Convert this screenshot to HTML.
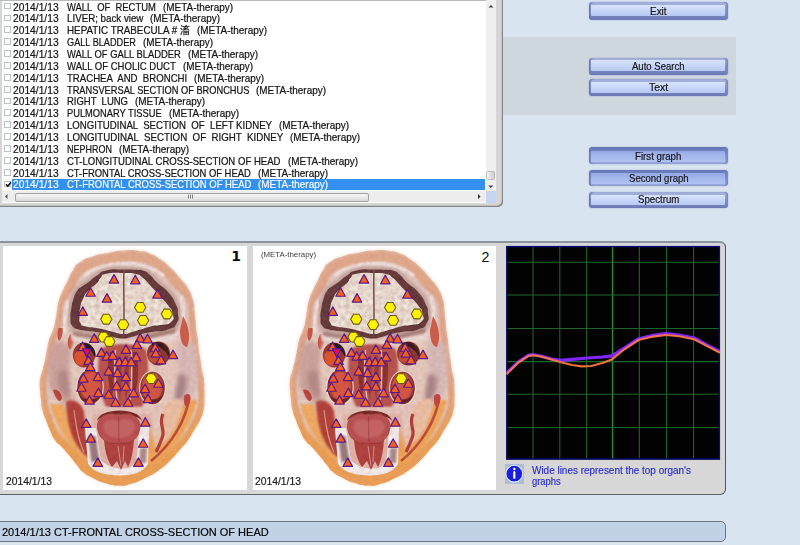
<!DOCTYPE html>
<html><head><meta charset="utf-8"><title>screen</title>
<style>
html,body{margin:0;padding:0;}
body{width:800px;height:545px;overflow:hidden;background:#d9e4f1;font-family:"Liberation Sans", "Noto Sans CJK SC", sans-serif;position:relative;}
.abs{position:absolute;}
.band{position:absolute;left:503px;top:37px;width:233px;height:78px;background:#ced6de;}
.listpanel{position:absolute;left:-4px;top:-6px;width:507.3px;height:213.3px;background:#d5d5d5;border-radius:0 0 5px 0;box-shadow:inset -1.2px -1.2px 0 #858585;}
.list{position:absolute;left:0;top:0;width:496px;height:203px;background:#fff;overflow:hidden;}
.list:before{content:"";position:absolute;left:0;top:0;width:2px;height:203px;background:#d6d6d6;}
.rt{position:absolute;transform-origin:0 0;-webkit-text-stroke:0.22px #1c1c1c;white-space:pre;font-size:10.2px;line-height:12px;color:#111;}
.rt.sel{color:#fff;-webkit-text-stroke:0.2px #eef4ff;}
.selrow{position:absolute;left:12.4px;width:473px;height:11.3px;background:#3390ee;}
.cb{position:absolute;left:4.4px;width:6.6px;height:6.8px;border:0.8px solid #bcc2c8;background:#fff;box-sizing:border-box;}
.cb svg{position:absolute;left:-0.8px;top:-0.6px;}
.vsb{position:absolute;left:485.5px;top:0;width:10.5px;height:190.5px;background:#efefef;}
.vthumb{position:absolute;left:486.3px;top:170.5px;width:9px;height:9.5px;background:linear-gradient(90deg,#f2f2f2,#cfcfcf);border:0.8px solid #bdbdbd;border-radius:1.5px;box-sizing:border-box;}
.hsb{position:absolute;left:2px;top:190.6px;width:483.5px;height:11.5px;background:#ededed;}
.hthumb{position:absolute;left:14.5px;top:193.2px;width:354px;height:9.3px;background:linear-gradient(#f8f8f8,#d9d9d9);border:1px solid #a0a0a0;border-radius:2px;box-sizing:border-box;}
.corner{position:absolute;left:485.5px;top:190.5px;width:10.5px;height:12.5px;background:#c6d6f2;}
.btn{position:absolute;border-radius:3.5px;background:linear-gradient(#a9b4dd 0%,#9aa7d6 25%,#7a89c0 70%,#6978b4 100%);box-shadow:0 0 1.2px rgba(110,125,185,.9), inset 1.5px 0 1px #6b7ab6, inset -1.5px 0 1px #7886be;}
.bi{position:absolute;border-radius:1px;background:linear-gradient(#d9e3fb 0%,#c8d6f8 50%,#b7c8f4 100%);}
.btn.pressed{background:linear-gradient(#6575b5 0%,#7585c2 30%,#8fa1d8 75%,#9aaade 100%);}
.btn.pressed .bi{background:linear-gradient(#94a8e4 0%,#a3b6ec 40%,#b0c2f2 100%);}
.bt{position:absolute;transform-origin:0 0;-webkit-text-stroke:0.2px #1c1c20;white-space:pre;font-size:10.3px;line-height:12px;color:#16161a;}
.lower{position:absolute;left:-5px;top:241px;width:731px;height:253.5px;background:#d7d7d8;border-radius:0 6px 6px 0;box-sizing:border-box;border-top:2.2px solid #8c939c;border-right:1.2px solid #4e5658;border-bottom:1.6px solid #5e6264;}
.img{position:absolute;top:246px;width:244px;height:244px;background:#fff;overflow:hidden;}
.head{position:absolute;left:0;top:0;}
.num{position:absolute;font-size:14.2px;line-height:16px;color:#0a0a0a;}
.date{position:absolute;-webkit-text-stroke:0.2px #222;transform-origin:0 0;font-size:10.2px;line-height:12px;color:#1a1a1a;white-space:pre;}
.meta{position:absolute;transform-origin:0 0;font-size:7.6px;line-height:10px;color:#3c3c3c;white-space:pre;}
.info{position:absolute;left:531.9px;-webkit-text-stroke:0.15px #3c3ccc;transform-origin:0 0;font-size:10.3px;line-height:12px;color:#2626cc;white-space:pre;}
.ico{position:absolute;left:505px;top:464.4px;width:19px;height:19.5px;background:#aabfd6;}
.status{position:absolute;left:-5px;top:520.8px;width:731px;height:21px;box-sizing:border-box;background:#c1d2e6;border:1px solid #6f767e;border-radius:0 5px 5px 0;}
.stext{position:absolute;-webkit-text-stroke:0.2px #111;left:2px;top:525.5px;transform-origin:0 0;font-size:11.2px;line-height:13px;color:#000;white-space:pre;}
</style></head><body>
<div class="band"></div>
<div class="listpanel"></div>
<div class="list">
<div class="cb" style="top:2.70px"></div>
<span class="rt" id="d0" style="left:13.4px;top:2.00px;transform:scaleX(1.0060)">2014/1/13</span>
<span class="rt" id="n0" style="left:67px;top:2.00px;transform:scaleX(0.9247)">WALL  OF  RECTUM</span>
<span class="rt" id="m0" style="left:162.80px;top:2.00px;transform:scaleX(0.9762)">(META-therapy)</span>
<div class="cb" style="top:14.56px"></div>
<span class="rt" id="d1" style="left:13.4px;top:13.00px;transform:scaleX(1.0060)">2014/1/13</span>
<span class="rt" id="n1" style="left:67px;top:13.00px;transform:scaleX(0.9569)">LIVER; back view</span>
<span class="rt" id="m1" style="left:150.40px;top:13.00px;transform:scaleX(0.9762)">(META-therapy)</span>
<div class="cb" style="top:26.42px"></div>
<span class="rt" id="d2" style="left:13.4px;top:25.00px;transform:scaleX(1.0060)">2014/1/13</span>
<span class="rt" id="n2" style="left:67px;top:25.00px;transform:scaleX(0.9640)">HEPATIC TRABECULA # 滀</span>
<span class="rt" id="m2" style="left:196.80px;top:25.00px;transform:scaleX(0.9762)">(META-therapy)</span>
<div class="cb" style="top:38.28px"></div>
<span class="rt" id="d3" style="left:13.4px;top:37.00px;transform:scaleX(1.0060)">2014/1/13</span>
<span class="rt" id="n3" style="left:67px;top:37.00px;transform:scaleX(0.8992)">GALL BLADDER</span>
<span class="rt" id="m3" style="left:142.90px;top:37.00px;transform:scaleX(0.9762)">(META-therapy)</span>
<div class="cb" style="top:50.14px"></div>
<span class="rt" id="d4" style="left:13.4px;top:49.00px;transform:scaleX(1.0060)">2014/1/13</span>
<span class="rt" id="n4" style="left:67px;top:49.00px;transform:scaleX(0.9229)">WALL OF GALL BLADDER</span>
<span class="rt" id="m4" style="left:187.90px;top:49.00px;transform:scaleX(0.9762)">(META-therapy)</span>
<div class="cb" style="top:62.00px"></div>
<span class="rt" id="d5" style="left:13.4px;top:61.00px;transform:scaleX(1.0060)">2014/1/13</span>
<span class="rt" id="n5" style="left:67px;top:61.00px;transform:scaleX(0.9345)">WALL OF CHOLIC DUCT</span>
<span class="rt" id="m5" style="left:182.80px;top:61.00px;transform:scaleX(0.9762)">(META-therapy)</span>
<div class="cb" style="top:73.86px"></div>
<span class="rt" id="d6" style="left:13.4px;top:73.00px;transform:scaleX(1.0060)">2014/1/13</span>
<span class="rt" id="n6" style="left:67px;top:73.00px;transform:scaleX(0.9437)">TRACHEA  AND  BRONCHI</span>
<span class="rt" id="m6" style="left:194.20px;top:73.00px;transform:scaleX(0.9762)">(META-therapy)</span>
<div class="cb" style="top:85.72px"></div>
<span class="rt" id="d7" style="left:13.4px;top:85.00px;transform:scaleX(1.0060)">2014/1/13</span>
<span class="rt" id="n7" style="left:67px;top:85.00px;transform:scaleX(0.9094)">TRANSVERSAL SECTION OF BRONCHUS</span>
<span class="rt" id="m7" style="left:256.40px;top:85.00px;transform:scaleX(0.9762)">(META-therapy)</span>
<div class="cb" style="top:97.58px"></div>
<span class="rt" id="d8" style="left:13.4px;top:96.00px;transform:scaleX(1.0060)">2014/1/13</span>
<span class="rt" id="n8" style="left:67px;top:96.00px;transform:scaleX(0.9315)">RIGHT  LUNG</span>
<span class="rt" id="m8" style="left:135.00px;top:96.00px;transform:scaleX(0.9762)">(META-therapy)</span>
<div class="cb" style="top:109.44px"></div>
<span class="rt" id="d9" style="left:13.4px;top:108.00px;transform:scaleX(1.0060)">2014/1/13</span>
<span class="rt" id="n9" style="left:67px;top:108.00px;transform:scaleX(0.9140)">PULMONARY TISSUE</span>
<span class="rt" id="m9" style="left:168.70px;top:108.00px;transform:scaleX(0.9762)">(META-therapy)</span>
<div class="cb" style="top:121.30px"></div>
<span class="rt" id="d10" style="left:13.4px;top:120.00px;transform:scaleX(1.0060)">2014/1/13</span>
<span class="rt" id="n10" style="left:67px;top:120.00px;transform:scaleX(0.9455)">LONGITUDINAL  SECTION  OF  LEFT KIDNEY</span>
<span class="rt" id="m10" style="left:279.00px;top:120.00px;transform:scaleX(0.9762)">(META-therapy)</span>
<div class="cb" style="top:133.16px"></div>
<span class="rt" id="d11" style="left:13.4px;top:132.00px;transform:scaleX(1.0060)">2014/1/13</span>
<span class="rt" id="n11" style="left:67px;top:132.00px;transform:scaleX(0.9549)">LONGITUDINAL  SECTION  OF  RIGHT  KIDNEY</span>
<span class="rt" id="m11" style="left:290.20px;top:132.00px;transform:scaleX(0.9762)">(META-therapy)</span>
<div class="cb" style="top:145.02px"></div>
<span class="rt" id="d12" style="left:13.4px;top:144.00px;transform:scaleX(1.0060)">2014/1/13</span>
<span class="rt" id="n12" style="left:67px;top:144.00px;transform:scaleX(0.8812)">NEPHRON</span>
<span class="rt" id="m12" style="left:118.90px;top:144.00px;transform:scaleX(0.9762)">(META-therapy)</span>
<div class="cb" style="top:156.88px"></div>
<span class="rt" id="d13" style="left:13.4px;top:156.00px;transform:scaleX(1.0060)">2014/1/13</span>
<span class="rt" id="n13" style="left:67px;top:156.00px;transform:scaleX(0.9398)">CT-LONGITUDINAL CROSS-SECTION OF HEAD</span>
<span class="rt" id="m13" style="left:287.50px;top:156.00px;transform:scaleX(0.9762)">(META-therapy)</span>
<div class="cb" style="top:168.74px"></div>
<span class="rt" id="d14" style="left:13.4px;top:168.00px;transform:scaleX(1.0060)">2014/1/13</span>
<span class="rt" id="n14" style="left:67px;top:168.00px;transform:scaleX(0.9251)">CT-FRONTAL CROSS-SECTION OF HEAD</span>
<span class="rt" id="m14" style="left:257.80px;top:168.00px;transform:scaleX(0.9762)">(META-therapy)</span>
<div class="selrow" style="top:178.8px"></div>
<div class="cb" style="top:180.60px"><svg width="7" height="7" viewBox="0 0 7 7"><path d="M1 3.2 L2.8 5.2 L6 1.2" fill="none" stroke="#000" stroke-width="1.5"/></svg></div>
<span class="rt sel" id="d15" style="left:13.4px;top:179.00px;transform:scaleX(1.0060)">2014/1/13</span>
<span class="rt sel" id="n15" style="left:67px;top:179.00px;transform:scaleX(0.9277)">CT-FRONTAL CROSS-SECTION OF HEAD</span>
<span class="rt sel" id="m15" style="left:258.30px;top:179.00px;transform:scaleX(0.9762)">(META-therapy)</span>
<div class="abs" style="left:0;top:0;width:496px;height:1.3px;background:#b9b9b9"></div><div class="vsb"></div><div class="vthumb"></div>
<div class="hsb"></div><div class="hthumb"></div><div class="corner"></div>
<svg class="abs" style="left:0;top:0" width="496" height="203" viewBox="0 0 496 203">
<path d="M488.5 7.5 L491 5 L493.5 7.5Z" fill="#444"/>
<path d="M488.3 185.6 L490.8 188.1 L493.3 185.6Z" fill="#444"/>
<path d="M7.5 194 L5 196.5 L7.5 199Z" fill="#555"/>
<path d="M478 194 L480.5 196.5 L478 199Z" fill="#333"/>
<path d="M188.5 194.5 V198.5 M190.5 194.5 V198.5 M192.5 194.5 V198.5" stroke="#666" stroke-width="0.8"/>
</svg>
</div>
<div class="btn" style="left:588.8px;top:2px;width:139.0px;height:18.0px"><div class="bi" style="left:2.5px;top:3.4px;width:133.3px;height:11.0px"></div></div><span class="bt" id="b0" style="left:650.00px;top:6px;transform:scaleX(0.9667)">Exit</span>
<div class="btn" style="left:588.8px;top:57.8px;width:139.0px;height:16.8px"><div class="bi" style="left:2.5px;top:2.7px;width:133.3px;height:11.0px"></div></div><span class="bt" id="b1" style="left:632.05px;top:61px;transform:scaleX(0.9264)">Auto Search</span>
<div class="btn" style="left:588.8px;top:79.2px;width:139.0px;height:17.0px"><div class="bi" style="left:2.5px;top:2.5px;width:133.3px;height:11.3px"></div></div><span class="bt" id="b2" style="left:648.70px;top:82px;transform:scaleX(1.0164)">Text</span>
<div class="btn pressed" style="left:588.8px;top:147.3px;width:139.0px;height:17.1px"><div class="bi" style="left:2.5px;top:3.7px;width:133.3px;height:10.8px"></div></div><span class="bt" id="b3" style="left:635.10px;top:151px;transform:scaleX(0.9427)">First graph</span>
<div class="btn pressed" style="left:588.8px;top:169.7px;width:139.0px;height:16.5px"><div class="bi" style="left:2.5px;top:3.3px;width:133.3px;height:10.6px"></div></div><span class="bt" id="b4" style="left:628.50px;top:173px;transform:scaleX(0.9294)">Second graph</span>
<div class="btn" style="left:588.8px;top:192.1px;width:139.0px;height:16.1px"><div class="bi" style="left:2.5px;top:2.7px;width:133.3px;height:10.0px"></div></div><span class="bt" id="b5" style="left:637.60px;top:194px;transform:scaleX(0.9392)">Spectrum</span>
<div class="lower"></div>
<div class="img" style="left:3px"><svg class="head" width="244" height="244" viewBox="3 246 244 244">
<defs>
<filter id="b05a" x="-20%" y="-20%" width="140%" height="140%"><feGaussianBlur stdDeviation="0.6"/></filter>
<filter id="b1a" x="-20%" y="-20%" width="140%" height="140%"><feGaussianBlur stdDeviation="1.1"/></filter>
<filter id="b2a" x="-30%" y="-30%" width="160%" height="160%"><feGaussianBlur stdDeviation="2"/></filter>
<filter id="b3a" x="-30%" y="-30%" width="160%" height="160%"><feGaussianBlur stdDeviation="3.2"/></filter>
<filter id="nza" x="0" y="0" width="100%" height="100%">
 <feTurbulence type="fractalNoise" baseFrequency="0.22" numOctaves="2" seed="7" result="n"/>
 <feColorMatrix in="n" type="matrix" values="0 0 0 0 0.45  0 0 0 0 0.2  0 0 0 0 0.18  0.9 0.9 0 0 -0.62"/>
 <feGaussianBlur stdDeviation="0.5"/>
</filter>
<linearGradient id="skina" x1="0" y1="0" x2="0" y2="1">
<stop offset="0" stop-color="#e2aa8c"/><stop offset="0.45" stop-color="#e0a488"/><stop offset="0.7" stop-color="#e6a572"/><stop offset="1" stop-color="#e8a267"/>
</linearGradient>
<clipPath id="hca"><path d="M124.0 250.5 C135.0 249.8 131.3 250.0 140.0 251.0 C148.7 252.0 143.3 250.8 150.0 253.5 C156.7 256.2 153.3 254.5 160.0 259.0 C166.7 263.5 163.3 260.7 170.0 267.0 C176.7 273.3 174.0 271.0 180.0 278.0 C186.0 285.0 183.7 280.7 188.0 288.0 C192.3 295.3 190.8 292.7 193.0 300.0 C195.2 307.3 193.7 303.3 194.5 310.0 C195.3 316.7 194.8 313.3 195.5 320.0 C196.2 326.7 195.7 323.3 196.5 330.0 C197.3 336.7 197.2 333.3 198.0 340.0 C198.8 346.7 198.2 343.3 199.0 350.0 C199.8 356.7 199.5 353.3 200.5 360.0 C201.5 366.7 200.8 363.3 202.0 370.0 C203.2 376.7 203.2 373.3 204.0 380.0 C204.8 386.7 204.3 383.3 204.5 390.0 C204.7 396.7 204.8 393.3 204.5 400.0 C204.2 406.7 205.0 403.3 203.5 410.0 C202.0 416.7 203.2 413.3 200.0 420.0 C196.8 426.7 198.0 423.3 194.0 430.0 C190.0 436.7 192.8 433.3 188.0 440.0 C183.2 446.7 185.3 443.3 179.5 450.0 C173.7 456.7 177.3 453.3 170.5 460.0 C163.7 466.7 167.5 464.0 159.0 470.0 C150.5 476.0 154.7 473.3 145.0 478.0 C135.3 482.7 139.0 481.5 130.0 484.0 C121.0 486.5 126.3 485.8 118.0 485.5 C109.7 485.2 113.3 485.5 105.0 483.0 C96.7 480.5 100.3 481.7 93.0 478.0 C85.7 474.3 88.3 476.3 83.0 472.0 C77.7 467.7 81.7 470.7 77.0 465.0 C72.3 459.3 74.0 461.0 69.0 455.0 C64.0 449.0 66.7 452.0 62.0 447.0 C57.3 442.0 59.0 445.7 55.0 440.0 C51.0 434.3 53.0 436.7 50.0 430.0 C47.0 423.3 48.5 426.7 46.0 420.0 C43.5 413.3 44.2 416.7 42.5 410.0 C40.8 403.3 41.8 406.7 41.0 400.0 C40.2 393.3 40.3 396.7 40.0 390.0 C39.7 383.3 39.2 386.7 40.0 380.0 C40.8 373.3 40.8 376.7 42.5 370.0 C44.2 363.3 43.5 366.7 45.0 360.0 C46.5 353.3 45.7 356.7 47.0 350.0 C48.3 343.3 47.0 346.7 49.0 340.0 C51.0 333.3 50.8 336.7 53.0 330.0 C55.2 323.3 54.2 326.7 55.5 320.0 C56.8 313.3 55.8 316.7 57.0 310.0 C58.2 303.3 57.0 306.7 59.0 300.0 C61.0 293.3 60.0 296.7 63.0 290.0 C66.0 283.3 64.7 286.7 68.0 280.0 C71.3 273.3 69.0 276.0 73.0 270.0 C77.0 264.0 73.0 266.7 80.0 262.0 C87.0 257.3 85.0 259.0 94.0 256.0 C103.0 253.0 97.0 254.8 107.0 253.0 C117.0 251.2 113.0 251.2 124.0 250.5Z"/></clipPath>
<clipPath id="bca"><path d="M124.0 273.0 C133.8 273.1 129.7 272.3 136.0 274.0 C142.3 275.7 138.6 274.5 143.0 278.0 C147.4 281.5 145.3 280.2 149.3 284.4 C153.3 288.6 151.3 286.5 155.0 290.5 C158.7 294.5 156.0 291.6 160.3 296.5 C164.6 301.4 164.0 299.8 168.0 305.3 C172.0 310.8 171.3 307.5 172.4 313.0 C173.5 318.5 175.3 317.8 171.3 321.8 C167.3 325.8 166.9 323.6 160.3 325.1 C153.7 326.6 158.1 324.7 151.5 326.2 C144.9 327.7 147.0 327.6 140.5 329.5 C134.0 331.4 137.8 330.5 132.0 332.0 C126.2 333.5 129.7 334.2 123.0 334.0 C116.3 333.8 119.9 333.4 112.0 331.5 C104.1 329.6 108.1 330.1 99.4 328.4 C90.7 326.7 92.3 328.3 86.0 326.5 C79.7 324.7 82.7 326.5 80.5 323.0 C78.3 319.5 79.6 321.2 79.5 316.0 C79.4 310.8 79.1 313.2 80.3 307.5 C81.5 301.8 80.4 304.5 83.0 299.0 C85.6 293.5 83.4 296.2 88.0 291.0 C92.6 285.8 92.6 287.6 96.8 283.3 C101.0 279.0 97.2 281.2 100.5 278.0 C103.8 274.8 98.9 275.5 106.7 273.8 C114.5 272.1 114.2 272.9 124.0 273.0Z"/></clipPath>
</defs>
<path d="M124.0 250.5 C135.0 249.8 131.3 250.0 140.0 251.0 C148.7 252.0 143.3 250.8 150.0 253.5 C156.7 256.2 153.3 254.5 160.0 259.0 C166.7 263.5 163.3 260.7 170.0 267.0 C176.7 273.3 174.0 271.0 180.0 278.0 C186.0 285.0 183.7 280.7 188.0 288.0 C192.3 295.3 190.8 292.7 193.0 300.0 C195.2 307.3 193.7 303.3 194.5 310.0 C195.3 316.7 194.8 313.3 195.5 320.0 C196.2 326.7 195.7 323.3 196.5 330.0 C197.3 336.7 197.2 333.3 198.0 340.0 C198.8 346.7 198.2 343.3 199.0 350.0 C199.8 356.7 199.5 353.3 200.5 360.0 C201.5 366.7 200.8 363.3 202.0 370.0 C203.2 376.7 203.2 373.3 204.0 380.0 C204.8 386.7 204.3 383.3 204.5 390.0 C204.7 396.7 204.8 393.3 204.5 400.0 C204.2 406.7 205.0 403.3 203.5 410.0 C202.0 416.7 203.2 413.3 200.0 420.0 C196.8 426.7 198.0 423.3 194.0 430.0 C190.0 436.7 192.8 433.3 188.0 440.0 C183.2 446.7 185.3 443.3 179.5 450.0 C173.7 456.7 177.3 453.3 170.5 460.0 C163.7 466.7 167.5 464.0 159.0 470.0 C150.5 476.0 154.7 473.3 145.0 478.0 C135.3 482.7 139.0 481.5 130.0 484.0 C121.0 486.5 126.3 485.8 118.0 485.5 C109.7 485.2 113.3 485.5 105.0 483.0 C96.7 480.5 100.3 481.7 93.0 478.0 C85.7 474.3 88.3 476.3 83.0 472.0 C77.7 467.7 81.7 470.7 77.0 465.0 C72.3 459.3 74.0 461.0 69.0 455.0 C64.0 449.0 66.7 452.0 62.0 447.0 C57.3 442.0 59.0 445.7 55.0 440.0 C51.0 434.3 53.0 436.7 50.0 430.0 C47.0 423.3 48.5 426.7 46.0 420.0 C43.5 413.3 44.2 416.7 42.5 410.0 C40.8 403.3 41.8 406.7 41.0 400.0 C40.2 393.3 40.3 396.7 40.0 390.0 C39.7 383.3 39.2 386.7 40.0 380.0 C40.8 373.3 40.8 376.7 42.5 370.0 C44.2 363.3 43.5 366.7 45.0 360.0 C46.5 353.3 45.7 356.7 47.0 350.0 C48.3 343.3 47.0 346.7 49.0 340.0 C51.0 333.3 50.8 336.7 53.0 330.0 C55.2 323.3 54.2 326.7 55.5 320.0 C56.8 313.3 55.8 316.7 57.0 310.0 C58.2 303.3 57.0 306.7 59.0 300.0 C61.0 293.3 60.0 296.7 63.0 290.0 C66.0 283.3 64.7 286.7 68.0 280.0 C71.3 273.3 69.0 276.0 73.0 270.0 C77.0 264.0 73.0 266.7 80.0 262.0 C87.0 257.3 85.0 259.0 94.0 256.0 C103.0 253.0 97.0 254.8 107.0 253.0 C117.0 251.2 113.0 251.2 124.0 250.5Z" fill="url(#skina)" filter="url(#b05a)"/>
<path d="M124.0 250.5 C135.0 249.8 131.3 250.0 140.0 251.0 C148.7 252.0 143.3 250.8 150.0 253.5 C156.7 256.2 153.3 254.5 160.0 259.0 C166.7 263.5 163.3 260.7 170.0 267.0 C176.7 273.3 174.0 271.0 180.0 278.0 C186.0 285.0 183.7 280.7 188.0 288.0 C192.3 295.3 190.8 292.7 193.0 300.0 C195.2 307.3 193.7 303.3 194.5 310.0 C195.3 316.7 194.8 313.3 195.5 320.0 C196.2 326.7 195.7 323.3 196.5 330.0 C197.3 336.7 197.2 333.3 198.0 340.0 C198.8 346.7 198.2 343.3 199.0 350.0 C199.8 356.7 199.5 353.3 200.5 360.0 C201.5 366.7 200.8 363.3 202.0 370.0 C203.2 376.7 203.2 373.3 204.0 380.0 C204.8 386.7 204.3 383.3 204.5 390.0 C204.7 396.7 204.8 393.3 204.5 400.0 C204.2 406.7 205.0 403.3 203.5 410.0 C202.0 416.7 203.2 413.3 200.0 420.0 C196.8 426.7 198.0 423.3 194.0 430.0 C190.0 436.7 192.8 433.3 188.0 440.0 C183.2 446.7 185.3 443.3 179.5 450.0 C173.7 456.7 177.3 453.3 170.5 460.0 C163.7 466.7 167.5 464.0 159.0 470.0 C150.5 476.0 154.7 473.3 145.0 478.0 C135.3 482.7 139.0 481.5 130.0 484.0 C121.0 486.5 126.3 485.8 118.0 485.5 C109.7 485.2 113.3 485.5 105.0 483.0 C96.7 480.5 100.3 481.7 93.0 478.0 C85.7 474.3 88.3 476.3 83.0 472.0 C77.7 467.7 81.7 470.7 77.0 465.0 C72.3 459.3 74.0 461.0 69.0 455.0 C64.0 449.0 66.7 452.0 62.0 447.0 C57.3 442.0 59.0 445.7 55.0 440.0 C51.0 434.3 53.0 436.7 50.0 430.0 C47.0 423.3 48.5 426.7 46.0 420.0 C43.5 413.3 44.2 416.7 42.5 410.0 C40.8 403.3 41.8 406.7 41.0 400.0 C40.2 393.3 40.3 396.7 40.0 390.0 C39.7 383.3 39.2 386.7 40.0 380.0 C40.8 373.3 40.8 376.7 42.5 370.0 C44.2 363.3 43.5 366.7 45.0 360.0 C46.5 353.3 45.7 356.7 47.0 350.0 C48.3 343.3 47.0 346.7 49.0 340.0 C51.0 333.3 50.8 336.7 53.0 330.0 C55.2 323.3 54.2 326.7 55.5 320.0 C56.8 313.3 55.8 316.7 57.0 310.0 C58.2 303.3 57.0 306.7 59.0 300.0 C61.0 293.3 60.0 296.7 63.0 290.0 C66.0 283.3 64.7 286.7 68.0 280.0 C71.3 273.3 69.0 276.0 73.0 270.0 C77.0 264.0 73.0 266.7 80.0 262.0 C87.0 257.3 85.0 259.0 94.0 256.0 C103.0 253.0 97.0 254.8 107.0 253.0 C117.0 251.2 113.0 251.2 124.0 250.5Z" fill="none" stroke="#f4d6c4" stroke-width="1.8" filter="url(#b1a)" opacity=".7"/>
<g clip-path="url(#hca)">
 <!-- inner pale (skull + soft tissue) -->
 <path d="M123.8 262.0 C133.7 261.3 130.4 261.5 138.2 262.4 C145.9 263.2 141.2 262.2 147.1 264.6 C153.1 267.1 150.1 265.6 156.0 269.8 C161.9 274.0 158.9 271.5 164.8 277.2 C170.7 283.0 168.0 281.1 173.7 287.0 C179.4 292.8 177.2 288.9 181.8 294.8 C186.5 300.6 185.4 298.1 187.7 304.5 C190.0 310.9 188.2 307.7 188.8 314.0 C189.3 320.3 188.9 317.2 189.4 323.4 C189.8 329.6 189.4 326.5 190.0 332.6 C190.6 338.8 190.6 335.7 191.2 341.8 C191.9 347.9 191.3 344.8 192.1 350.9 C192.8 357.0 192.5 353.9 193.5 360.0 C194.5 366.1 193.8 363.0 195.1 369.1 C196.3 375.2 196.2 372.2 197.2 378.3 C198.2 384.5 197.6 381.4 197.9 387.6 C198.3 393.8 198.3 390.7 198.2 396.9 C198.1 403.2 198.8 400.1 197.5 406.3 C196.3 412.6 197.1 409.3 194.5 415.7 C191.8 422.1 192.8 418.9 189.5 425.6 C186.2 432.2 188.7 428.9 184.5 435.7 C180.2 442.4 182.1 439.0 176.9 445.9 C171.6 452.7 175.0 449.3 168.7 456.2 C162.4 463.2 166.0 460.6 157.9 466.7 C149.8 472.8 153.7 470.0 144.3 474.6 C135.0 479.2 138.5 478.0 129.8 480.5 C121.0 483.0 126.2 482.3 118.1 482.0 C110.0 481.7 113.6 482.0 105.5 479.5 C97.4 477.1 101.0 478.2 93.8 474.6 C86.7 471.0 89.3 473.1 84.2 468.7 C79.1 464.3 82.8 467.4 78.5 461.5 C74.2 455.6 75.8 457.3 71.2 451.0 C66.7 444.8 69.1 447.9 64.9 442.8 C60.7 437.7 62.1 441.4 58.6 435.7 C55.1 430.0 56.9 432.3 54.5 425.6 C52.2 418.9 53.5 422.1 51.5 415.7 C49.5 409.2 49.8 412.5 48.4 406.3 C47.0 400.0 47.9 403.1 47.3 396.9 C46.7 390.7 46.7 393.8 46.6 387.6 C46.4 381.4 45.8 384.5 46.8 378.4 C47.8 372.2 47.7 375.2 49.4 369.1 C51.2 363.0 50.5 366.1 52.0 360.0 C53.5 353.9 52.7 357.0 53.9 350.9 C55.2 344.9 53.9 347.9 55.8 341.8 C57.6 335.8 57.5 338.9 59.4 332.8 C61.3 326.7 60.5 329.8 61.5 323.6 C62.6 317.4 61.7 320.5 62.6 314.2 C63.4 308.0 62.0 310.7 64.1 304.8 C66.1 299.0 65.4 302.1 68.7 296.7 C72.0 291.4 70.7 294.3 74.0 288.8 C77.2 283.2 75.0 285.5 78.5 280.1 C82.1 274.7 78.4 276.9 84.6 272.6 C90.7 268.2 89.0 269.8 97.0 267.1 C105.1 264.4 99.7 266.1 108.6 264.4 C117.6 262.7 114.0 262.7 123.8 262.0Z" fill="#e4ccc4" filter="url(#b1a)"/>
 <!-- mauve shadow around brain -->
 <path d="M124.0 269.5 C133.8 269.3 129.5 269.4 136.0 269.8 C142.5 270.2 138.7 269.1 143.4 270.8 C148.1 272.5 145.5 271.1 150.0 275.0 C154.5 278.9 151.0 276.8 157.0 282.5 C163.0 288.2 161.8 284.9 168.0 292.1 C174.2 299.3 172.4 297.2 175.7 304.2 C179.0 311.2 177.5 306.7 177.9 313.0 C178.3 319.3 180.1 317.5 176.8 323.0 C173.5 328.5 176.4 326.5 168.0 329.5 C159.6 332.5 160.7 330.4 151.5 332.0 C142.3 333.6 147.0 332.6 140.5 334.2 C134.0 335.8 137.8 335.4 132.0 336.8 C126.2 338.2 129.7 338.6 123.0 338.5 C116.3 338.4 120.0 338.5 112.0 336.5 C104.0 334.5 107.0 334.3 99.0 332.5 C91.0 330.7 94.7 332.0 88.0 331.0 C81.3 330.0 84.2 331.2 79.0 329.5 C73.8 327.8 75.3 329.8 72.5 326.0 C69.7 322.2 70.8 324.2 70.5 318.0 C70.2 311.8 70.5 313.8 71.5 307.5 C72.5 301.2 71.7 304.5 73.5 299.0 C75.3 293.5 74.2 295.2 77.0 291.0 C79.8 286.8 78.3 289.3 82.0 286.5 C85.7 283.7 83.0 286.2 88.0 282.5 C93.0 278.8 90.8 279.5 97.0 275.5 C103.2 271.5 97.7 272.4 106.7 270.4 C115.7 268.4 114.2 269.7 124.0 269.5Z" fill="none" stroke="#b08a86" stroke-width="5" filter="url(#b2a)" opacity=".8"/>
 <!-- white highlights on skull -->
 <path d="M84 276 C96 266 110 263.5 124 263.5 C138 263.5 152 266 164 276" fill="none" stroke="#f6ecea" stroke-width="2.5" filter="url(#b1a)"/>
 <path d="M68 300 C66 310 64 322 64 334" fill="none" stroke="#f3e6e2" stroke-width="3" filter="url(#b1a)"/>
 <path d="M181 296 C183 306 184 318 184 330" fill="none" stroke="#f3e6e2" stroke-width="3" filter="url(#b1a)"/>
 <!-- lower orange fat -->
 <path d="M38 398 C44 445 80 488 122 488 C165 488 202 445 207 398 C200 420 184 440 162 452 C152 444 150 425 150 415 L96 415 C96 425 94 444 84 452 C62 440 46 420 38 398Z" fill="#eda052" filter="url(#b2a)"/>
 <path d="M50 404 C56 430 74 452 94 466 L99 456 C84 444 70 428 64 404Z" fill="#f2ab60" filter="url(#b1a)"/>
 <path d="M197 400 C190 430 172 452 150 466 L146 456 C164 442 178 424 184 400Z" fill="#f2a654" filter="url(#b1a)"/>
 <!-- cheeks pale gray-pink -->
 <path d="M52 345 C58 338 70 342 74 350 C78 370 76 395 82 410 C70 410 54 400 49 385 C47 370 49 355 52 345Z" fill="#cda59e" filter="url(#b2a)"/>
 <path d="M58 372 C62 368 70 370 72 378 C73 388 72 394 68 398 C60 394 56 384 58 372Z" fill="#b48a88" filter="url(#b2a)"/>
 <path d="M195 345 C189 338 176 342 172 350 C168 370 170 395 164 410 C176 410 192 400 197 385 C199 370 197 355 195 345Z" fill="#d9bcba" filter="url(#b2a)"/>
 <path d="M186 376 C182 372 174 374 172 382 C171 392 173 398 178 402 C184 398 188 388 186 376Z" fill="#a88486" filter="url(#b2a)"/>
 <!-- temporal muscle crescents -->
 <path d="M58.5 328 C57 334 57 338 59 341 C62 338 63 333 62.5 328Z" fill="#c4523f" filter="url(#b05a)"/>
 <path d="M70 334 C67 340 67 346 70 350 C74 346 75 340 74 334Z" fill="#c8503e" filter="url(#b05a)"/>
 <path d="M183 316 C189 326 191 338 187 347 C182 346 180 340 180 330Z" fill="#cc5a46" filter="url(#b05a)"/>
 <!-- mid face base pale -->
 <path d="M74 340 C96 336 150 336 174 340 C180 356 180 392 168 408 C150 414 96 414 78 408 C66 392 68 356 74 340Z" fill="#e6cabf" filter="url(#b2a)"/>
 <!-- pale bone between orbits / under brain -->
 <path d="M70 333 C90 337 110 339 124 343 C138 339 158 337 178 332 L176 340 C160 344 140 344 124 348 C108 344 88 344 72 341Z" fill="#ecdcd6" filter="url(#b1a)"/>
 <!-- shadow under brain -->
 <path d="M72 331 C84 334 100 335 110 337 L108 341 C98 339 84 338 74 336Z" fill="#9a6e68" filter="url(#b1a)" opacity=".8"/>
 <path d="M176 328 C164 332 148 334 138 337 L140 341 C150 338 164 336 175 333Z" fill="#9a6e68" filter="url(#b1a)" opacity=".8"/>
 <!-- orbits -->
 <ellipse cx="84" cy="355" rx="11.2" ry="12.5" fill="#96342a" filter="url(#b05a)"/>
 <path d="M80 343.2 C90 341.5 96.5 348 95.5 358 C93 351 88 347 80 346.5Z" fill="#160a0a" filter="url(#b05a)"/>
 <ellipse cx="82" cy="357.5" rx="7.8" ry="8.3" fill="#de5028" filter="url(#b05a)"/>
 <ellipse cx="158.5" cy="353.5" rx="11.5" ry="12" fill="#86302a" filter="url(#b05a)"/>
 <path d="M152 342.5 C163 340 170.5 347 169.5 358 C166 351 161 346 152 345.5Z" fill="#341412" filter="url(#b05a)"/>
 <ellipse cx="155" cy="356.5" rx="6.5" ry="6.5" fill="#c4482e" filter="url(#b05a)"/>
 <!-- nasal cavity -->
 <path d="M100 350 C108 342 138 342 146 350 C150 365 148 392 142 407 L106 407 C99 392 96 365 100 350Z" fill="#b85048" filter="url(#b1a)"/>
 <path d="M110 352 C106 366 108 384 112 398 C114 384 114 366 113 352Z" fill="#8a2e2c" filter="url(#b05a)"/>
 <path d="M136 352 C140 366 138 384 134 398 C132 384 132 366 133 352Z" fill="#8a2e2c" filter="url(#b05a)"/>
 <path d="M118 356 C116 370 117 388 120 400 C122 388 122 370 121 356Z" fill="#9a3836" filter="url(#b05a)"/>
 <path d="M128 356 C130 370 129 388 126 400 C124 388 124 370 125 356Z" fill="#9a3836" filter="url(#b05a)"/>
 <path d="M123.5 346 L123.5 404" stroke="#eed2ca" stroke-width="1.8" fill="none" filter="url(#b05a)"/>
 <path d="M115.5 350 C114 364 115 384 117 400 M131 350 C132.5 364 131.5 384 130 400" stroke="#e6beb4" stroke-width="1.400" fill="none" filter="url(#b05a)"/>
 <!-- maxillary sinuses -->
 <ellipse cx="90" cy="387" rx="13.8" ry="18.3" fill="#f0ded8" filter="url(#b05a)"/>
 <ellipse cx="90" cy="387" rx="12.6" ry="17.2" fill="#7e2826" filter="url(#b05a)"/>
 <ellipse cx="90.5" cy="386" rx="10.8" ry="15" fill="#d8523e" filter="url(#b1a)"/>
 <path d="M80 396 C84 404 96 405 101 396 C96 400 86 401 80 396Z" fill="#5e1c1c" filter="url(#b05a)"/>
 <ellipse cx="152.5" cy="388" rx="13.5" ry="17.5" fill="#f0ded8" filter="url(#b05a)"/>
 <ellipse cx="152.5" cy="388" rx="12.3" ry="16.3" fill="#7e2826" filter="url(#b05a)"/>
 <ellipse cx="152" cy="387" rx="10.5" ry="14.3" fill="#d25240" filter="url(#b1a)"/>
 <path d="M143 397 C148 405 159 405 163 395 C158 400 149 401 143 397Z" fill="#5e1c1c" filter="url(#b05a)"/>
 <!-- palate pale band -->
 <path d="M82 404 C100 410 146 410 166 404 L164 414 C146 419 100 419 84 414Z" fill="#e6c8be" filter="url(#b1a)"/>
 <!-- masseter / pterygoid muscles -->
 <path d="M66 402 C72 398 82 402 84 412 C86 428 86 444 91 459 C78 452 67 434 66 402Z" fill="#b03e34" filter="url(#b1a)"/><path d="M74 410 C76 426 78 440 84 452" stroke="#e6b8a8" stroke-width="1.2" fill="none" filter="url(#b05a)" opacity=".7"/>
 <path d="M182 400 C174 396 164 402 162 412 C160 424 158 436 154 448 C166 444 180 430 182 400Z" fill="#ecc0a4" filter="url(#b1a)"/><path d="M189 398 C186 420 172 444 151 461" stroke="#b94a38" stroke-width="2.6" fill="none" filter="url(#b05a)"/><path d="M163 414 C158 424 166 430 162 438 C160 444 158 448 156 452" stroke="#b03a34" stroke-width="3.2" fill="none" filter="url(#b05a)"/>
 
 <path d="M53 390 C57 388 61 392 62 398 C60 404 56 400 53 390Z" fill="#b84038" filter="url(#b05a)"/>
 <path d="M184 396 C188 392 192 394 190 402 C188 410 183 408 184 396Z" fill="#c0443c" filter="url(#b05a)"/>
 <!-- mouth floor pinkish -->
 <path d="M94 414 L152 414 L150 440 L140 470 L98 470 L92 440Z" fill="#e2b4a8" filter="url(#b1a)"/>
 <!-- mandible white U -->
 <path d="M85 428 L96 428 L101 460 C106 466 114 468.5 122 468.5 C130 468.5 134 466 136.5 460 L139.5 427 L149 427 L148 464 C143 472 134 475.5 120 475.5 C104 475.5 94 472 88 464Z" fill="#f4efee" filter="url(#b05a)"/>
 <path d="M88 436 L95.5 436 L99.5 461 L91.5 462Z" fill="#8c6a6e" filter="url(#b1a)" opacity=".9"/>
 <path d="M147 448 L140.5 448 L139 463 L146 463Z" fill="#9a7876" filter="url(#b1a)" opacity=".85"/>
 <!-- oral cavity dark arc -->
 <path d="M97 421 C99 407 140 407 142 421 C138 412.5 101 412.5 97 421Z" fill="#742622" filter="url(#b05a)"/>
 <!-- genioglossus (lower tongue) -->
 <path d="M104 436 L134 436 C134 450 131 462 128 467 L125 461 L121 470 L117 461 L112 467 C108 462 104 450 104 436Z" fill="#ad3e3a" filter="url(#b05a)"/>
 <path d="M118 446 L121 466 M124 446 L123 462" stroke="#e8c8c0" stroke-width="0.9" fill="none" opacity=".7"/>
 <!-- tongue -->
 <path d="M97.5 427 C97 415.5 109 411 118.5 415.5 C128 411 140.5 415.5 140 427 C139.5 436 134 441 128 443 L110 443 C103 441 98 436 97.5 427Z" fill="#b94c4e" stroke="#8e3434" stroke-width="0.6" filter="url(#b05a)"/>
 <path d="M103 427 C103 420 111 417 118.5 421 C126 417 135 420 135 427 C134 434 128 438 119 438 C110 438 104 434 103 427Z" fill="#c96a6a" filter="url(#b1a)" opacity=".75"/>
 <path d="M118.5 416 L119 442" stroke="#8e3438" stroke-width="0.9" opacity=".7"/>
 <!-- brain -->
 <path d="M124.0 269.5 C133.8 269.3 129.5 269.4 136.0 269.8 C142.5 270.2 138.7 269.1 143.4 270.8 C148.1 272.5 145.5 271.1 150.0 275.0 C154.5 278.9 151.0 276.8 157.0 282.5 C163.0 288.2 161.8 284.9 168.0 292.1 C174.2 299.3 172.4 297.2 175.7 304.2 C179.0 311.2 177.5 306.7 177.9 313.0 C178.3 319.3 180.1 317.5 176.8 323.0 C173.5 328.5 176.4 326.5 168.0 329.5 C159.6 332.5 160.7 330.4 151.5 332.0 C142.3 333.6 147.0 332.6 140.5 334.2 C134.0 335.8 137.8 335.4 132.0 336.8 C126.2 338.2 129.7 338.6 123.0 338.5 C116.3 338.4 120.0 338.5 112.0 336.5 C104.0 334.5 107.0 334.3 99.0 332.5 C91.0 330.7 94.7 332.0 88.0 331.0 C81.3 330.0 84.2 331.2 79.0 329.5 C73.8 327.8 75.3 329.8 72.5 326.0 C69.7 322.2 70.8 324.2 70.5 318.0 C70.2 311.8 70.5 313.8 71.5 307.5 C72.5 301.2 71.7 304.5 73.5 299.0 C75.3 293.5 74.2 295.2 77.0 291.0 C79.8 286.8 78.3 289.3 82.0 286.5 C85.7 283.7 83.0 286.2 88.0 282.5 C93.0 278.8 90.8 279.5 97.0 275.5 C103.2 271.5 97.7 272.4 106.7 270.4 C115.7 268.4 114.2 269.7 124.0 269.5Z" fill="#5e3634" filter="url(#b05a)"/>
 <path d="M124.0 273.0 C133.8 273.1 129.7 272.3 136.0 274.0 C142.3 275.7 138.6 274.5 143.0 278.0 C147.4 281.5 145.3 280.2 149.3 284.4 C153.3 288.6 151.3 286.5 155.0 290.5 C158.7 294.5 156.0 291.6 160.3 296.5 C164.6 301.4 164.0 299.8 168.0 305.3 C172.0 310.8 171.3 307.5 172.4 313.0 C173.5 318.5 175.3 317.8 171.3 321.8 C167.3 325.8 166.9 323.6 160.3 325.1 C153.7 326.6 158.1 324.7 151.5 326.2 C144.9 327.7 147.0 327.6 140.5 329.5 C134.0 331.4 137.8 330.5 132.0 332.0 C126.2 333.5 129.7 334.2 123.0 334.0 C116.3 333.8 119.9 333.4 112.0 331.5 C104.1 329.6 108.1 330.1 99.4 328.4 C90.7 326.7 92.3 328.3 86.0 326.5 C79.7 324.7 82.7 326.5 80.5 323.0 C78.3 319.5 79.6 321.2 79.5 316.0 C79.4 310.8 79.1 313.2 80.3 307.5 C81.5 301.8 80.4 304.5 83.0 299.0 C85.6 293.5 83.4 296.2 88.0 291.0 C92.6 285.8 92.6 287.6 96.8 283.3 C101.0 279.0 97.2 281.2 100.5 278.0 C103.8 274.8 98.9 275.5 106.7 273.8 C114.5 272.1 114.2 272.9 124.0 273.0Z" fill="#f0e8dc" filter="url(#b05a)"/>
 <g clip-path="url(#bca)"><rect x="70" y="268" width="112" height="72" fill="#b89080" filter="url(#nza)" opacity=".32"/></g>
 <path d="M124 270 C123 290 125 310 123.5 337" stroke="#6e4a44" stroke-width="1.5" fill="none" filter="url(#b05a)"/>
 <!-- overall texture -->
 <rect x="36" y="248" width="172" height="240" fill="#000" filter="url(#nza)" opacity=".28"/>
</g>
<polygon points="145.8,307.4 143.0,312.3 137.4,312.3 134.6,307.4 137.4,302.5 143.0,302.5" fill="#fff200" stroke="#6e5e14" stroke-width="1.1"/><polygon points="172.5,314.0 169.7,318.9 164.1,318.9 161.3,314.0 164.1,309.1 169.7,309.1" fill="#fff200" stroke="#6e5e14" stroke-width="1.1"/><polygon points="111.9,319.2 109.1,324.1 103.5,324.1 100.7,319.2 103.5,314.3 109.1,314.3" fill="#fff200" stroke="#6e5e14" stroke-width="1.1"/><polygon points="148.7,320.4 145.9,325.3 140.3,325.3 137.5,320.4 140.3,315.5 145.9,315.5" fill="#fff200" stroke="#6e5e14" stroke-width="1.1"/><polygon points="128.8,324.6 126.0,329.5 120.4,329.5 117.6,324.6 120.4,319.7 126.0,319.7" fill="#fff200" stroke="#6e5e14" stroke-width="1.1"/><polygon points="114.0,274.6 118.8,283.1 109.2,283.1" fill="#f5601a" stroke="#5a1a8c" stroke-width="1.15" stroke-linejoin="round"/><polygon points="135.3,275.2 140.1,283.8 130.6,283.8" fill="#f5601a" stroke="#5a1a8c" stroke-width="1.15" stroke-linejoin="round"/><polygon points="90.6,287.8 95.3,296.2 85.8,296.2" fill="#f5601a" stroke="#5a1a8c" stroke-width="1.15" stroke-linejoin="round"/><polygon points="157.4,289.6 162.2,298.1 152.7,298.1" fill="#f5601a" stroke="#5a1a8c" stroke-width="1.15" stroke-linejoin="round"/><polygon points="107.0,293.6 111.8,302.1 102.2,302.1" fill="#f5601a" stroke="#5a1a8c" stroke-width="1.15" stroke-linejoin="round"/><polygon points="82.8,306.9 87.5,315.4 78.0,315.4" fill="#f5601a" stroke="#5a1a8c" stroke-width="1.15" stroke-linejoin="round"/><polygon points="94.3,333.9 99.0,342.4 89.5,342.4" fill="#f5601a" stroke="#5a1a8c" stroke-width="1.15" stroke-linejoin="round"/><polygon points="140.2,333.6 144.9,342.1 135.4,342.1" fill="#f5601a" stroke="#5a1a8c" stroke-width="1.15" stroke-linejoin="round"/><polygon points="147.5,334.2 152.2,342.8 142.8,342.8" fill="#f5601a" stroke="#5a1a8c" stroke-width="1.15" stroke-linejoin="round"/><polygon points="136.9,339.9 141.7,348.4 132.2,348.4" fill="#f5601a" stroke="#5a1a8c" stroke-width="1.15" stroke-linejoin="round"/><polygon points="82.6,342.1 87.3,350.6 77.8,350.6" fill="#f5601a" stroke="#5a1a8c" stroke-width="1.15" stroke-linejoin="round"/><polygon points="125.9,344.9 130.7,353.4 121.2,353.4" fill="#f5601a" stroke="#5a1a8c" stroke-width="1.15" stroke-linejoin="round"/><polygon points="101.4,347.9 106.2,356.4 96.7,356.4" fill="#f5601a" stroke="#5a1a8c" stroke-width="1.15" stroke-linejoin="round"/><polygon points="106.8,351.6 111.5,360.1 102.0,360.1" fill="#f5601a" stroke="#5a1a8c" stroke-width="1.15" stroke-linejoin="round"/><polygon points="112.7,350.9 117.5,359.4 108.0,359.4" fill="#f5601a" stroke="#5a1a8c" stroke-width="1.15" stroke-linejoin="round"/><polygon points="136.2,352.4 140.9,360.9 131.4,360.9" fill="#f5601a" stroke="#5a1a8c" stroke-width="1.15" stroke-linejoin="round"/><polygon points="155.1,342.8 159.8,351.2 150.3,351.2" fill="#f5601a" stroke="#5a1a8c" stroke-width="1.15" stroke-linejoin="round"/><polygon points="155.8,348.6 160.6,357.1 151.1,357.1" fill="#f5601a" stroke="#5a1a8c" stroke-width="1.15" stroke-linejoin="round"/><polygon points="161.0,355.2 165.8,363.8 156.2,363.8" fill="#f5601a" stroke="#5a1a8c" stroke-width="1.15" stroke-linejoin="round"/><polygon points="173.0,350.1 177.8,358.6 168.2,358.6" fill="#f5601a" stroke="#5a1a8c" stroke-width="1.15" stroke-linejoin="round"/><polygon points="88.5,355.9 93.2,364.4 83.8,364.4" fill="#f5601a" stroke="#5a1a8c" stroke-width="1.15" stroke-linejoin="round"/><polygon points="119.3,357.4 124.0,365.9 114.5,365.9" fill="#f5601a" stroke="#5a1a8c" stroke-width="1.15" stroke-linejoin="round"/><polygon points="125.2,357.1 129.9,365.6 120.5,365.6" fill="#f5601a" stroke="#5a1a8c" stroke-width="1.15" stroke-linejoin="round"/><polygon points="131.3,357.4 136.1,365.9 126.6,365.9" fill="#f5601a" stroke="#5a1a8c" stroke-width="1.15" stroke-linejoin="round"/><polygon points="90.2,362.1 95.0,370.6 85.5,370.6" fill="#f5601a" stroke="#5a1a8c" stroke-width="1.15" stroke-linejoin="round"/><polygon points="108.7,366.6 113.5,375.1 104.0,375.1" fill="#f5601a" stroke="#5a1a8c" stroke-width="1.15" stroke-linejoin="round"/><polygon points="117.5,368.1 122.2,376.6 112.8,376.6" fill="#f5601a" stroke="#5a1a8c" stroke-width="1.15" stroke-linejoin="round"/><polygon points="98.0,372.1 102.8,380.6 93.2,380.6" fill="#f5601a" stroke="#5a1a8c" stroke-width="1.15" stroke-linejoin="round"/><polygon points="125.9,372.1 130.7,380.6 121.2,380.6" fill="#f5601a" stroke="#5a1a8c" stroke-width="1.15" stroke-linejoin="round"/><polygon points="83.3,373.6 88.0,382.1 78.5,382.1" fill="#f5601a" stroke="#5a1a8c" stroke-width="1.15" stroke-linejoin="round"/><polygon points="116.7,381.2 121.5,389.8 112.0,389.8" fill="#f5601a" stroke="#5a1a8c" stroke-width="1.15" stroke-linejoin="round"/><polygon points="125.9,381.8 130.7,390.2 121.2,390.2" fill="#f5601a" stroke="#5a1a8c" stroke-width="1.15" stroke-linejoin="round"/><polygon points="158.3,378.8 163.1,387.2 153.6,387.2" fill="#f5601a" stroke="#5a1a8c" stroke-width="1.15" stroke-linejoin="round"/><polygon points="81.4,382.8 86.2,391.2 76.7,391.2" fill="#f5601a" stroke="#5a1a8c" stroke-width="1.15" stroke-linejoin="round"/><polygon points="145.0,384.1 149.8,392.6 140.2,392.6" fill="#f5601a" stroke="#5a1a8c" stroke-width="1.15" stroke-linejoin="round"/><polygon points="98.4,388.1 103.2,396.6 93.7,396.6" fill="#f5601a" stroke="#5a1a8c" stroke-width="1.15" stroke-linejoin="round"/><polygon points="108.7,389.8 113.5,398.2 104.0,398.2" fill="#f5601a" stroke="#5a1a8c" stroke-width="1.15" stroke-linejoin="round"/><polygon points="133.7,388.2 138.4,396.8 128.9,396.8" fill="#f5601a" stroke="#5a1a8c" stroke-width="1.15" stroke-linejoin="round"/><polygon points="147.9,394.1 152.7,402.6 143.2,402.6" fill="#f5601a" stroke="#5a1a8c" stroke-width="1.15" stroke-linejoin="round"/><polygon points="89.6,395.6 94.3,404.1 84.8,404.1" fill="#f5601a" stroke="#5a1a8c" stroke-width="1.15" stroke-linejoin="round"/><polygon points="115.6,397.8 120.3,406.2 110.8,406.2" fill="#f5601a" stroke="#5a1a8c" stroke-width="1.15" stroke-linejoin="round"/><polygon points="128.1,397.8 132.8,406.2 123.3,406.2" fill="#f5601a" stroke="#5a1a8c" stroke-width="1.15" stroke-linejoin="round"/><polygon points="86.2,418.9 91.0,427.4 81.5,427.4" fill="#f5601a" stroke="#5a1a8c" stroke-width="1.15" stroke-linejoin="round"/><polygon points="145.3,417.6 150.1,426.1 140.6,426.1" fill="#f5601a" stroke="#5a1a8c" stroke-width="1.15" stroke-linejoin="round"/><polygon points="90.8,433.6 95.5,442.1 86.0,442.1" fill="#f5601a" stroke="#5a1a8c" stroke-width="1.15" stroke-linejoin="round"/><polygon points="143.2,438.8 147.9,447.2 138.4,447.2" fill="#f5601a" stroke="#5a1a8c" stroke-width="1.15" stroke-linejoin="round"/><polygon points="97.8,457.9 102.5,466.4 93.0,466.4" fill="#f5601a" stroke="#5a1a8c" stroke-width="1.15" stroke-linejoin="round"/><polygon points="138.4,457.9 143.2,466.4 133.7,466.4" fill="#f5601a" stroke="#5a1a8c" stroke-width="1.15" stroke-linejoin="round"/><polygon points="109.1,337.1 106.3,342.0 100.7,342.0 97.9,337.1 100.7,332.2 106.3,332.2" fill="#fff200" stroke="#6e5e14" stroke-width="1.1"/><polygon points="115.0,341.5 112.2,346.4 106.6,346.4 103.8,341.5 106.6,336.6 112.2,336.6" fill="#fff200" stroke="#6e5e14" stroke-width="1.1"/><polygon points="156.7,378.6 153.9,383.5 148.3,383.5 145.5,378.6 148.3,373.7 153.9,373.7" fill="#fff200" stroke="#6e5e14" stroke-width="1.1"/><polygon points="82.6,348.8 91,348.8 86.8,357" fill="#e8104e" stroke="#3a12b0" stroke-width="1.1"/>
</svg></div>
<div class="img" style="left:252.8px;width:243.5px"><svg class="head" width="244" height="244" viewBox="3 246 244 244">
<defs>
<filter id="b05b" x="-20%" y="-20%" width="140%" height="140%"><feGaussianBlur stdDeviation="0.6"/></filter>
<filter id="b1b" x="-20%" y="-20%" width="140%" height="140%"><feGaussianBlur stdDeviation="1.1"/></filter>
<filter id="b2b" x="-30%" y="-30%" width="160%" height="160%"><feGaussianBlur stdDeviation="2"/></filter>
<filter id="b3b" x="-30%" y="-30%" width="160%" height="160%"><feGaussianBlur stdDeviation="3.2"/></filter>
<filter id="nzb" x="0" y="0" width="100%" height="100%">
 <feTurbulence type="fractalNoise" baseFrequency="0.22" numOctaves="2" seed="7" result="n"/>
 <feColorMatrix in="n" type="matrix" values="0 0 0 0 0.45  0 0 0 0 0.2  0 0 0 0 0.18  0.9 0.9 0 0 -0.62"/>
 <feGaussianBlur stdDeviation="0.5"/>
</filter>
<linearGradient id="skinb" x1="0" y1="0" x2="0" y2="1">
<stop offset="0" stop-color="#e2aa8c"/><stop offset="0.45" stop-color="#e0a488"/><stop offset="0.7" stop-color="#e6a572"/><stop offset="1" stop-color="#e8a267"/>
</linearGradient>
<clipPath id="hcb"><path d="M124.0 250.5 C135.0 249.8 131.3 250.0 140.0 251.0 C148.7 252.0 143.3 250.8 150.0 253.5 C156.7 256.2 153.3 254.5 160.0 259.0 C166.7 263.5 163.3 260.7 170.0 267.0 C176.7 273.3 174.0 271.0 180.0 278.0 C186.0 285.0 183.7 280.7 188.0 288.0 C192.3 295.3 190.8 292.7 193.0 300.0 C195.2 307.3 193.7 303.3 194.5 310.0 C195.3 316.7 194.8 313.3 195.5 320.0 C196.2 326.7 195.7 323.3 196.5 330.0 C197.3 336.7 197.2 333.3 198.0 340.0 C198.8 346.7 198.2 343.3 199.0 350.0 C199.8 356.7 199.5 353.3 200.5 360.0 C201.5 366.7 200.8 363.3 202.0 370.0 C203.2 376.7 203.2 373.3 204.0 380.0 C204.8 386.7 204.3 383.3 204.5 390.0 C204.7 396.7 204.8 393.3 204.5 400.0 C204.2 406.7 205.0 403.3 203.5 410.0 C202.0 416.7 203.2 413.3 200.0 420.0 C196.8 426.7 198.0 423.3 194.0 430.0 C190.0 436.7 192.8 433.3 188.0 440.0 C183.2 446.7 185.3 443.3 179.5 450.0 C173.7 456.7 177.3 453.3 170.5 460.0 C163.7 466.7 167.5 464.0 159.0 470.0 C150.5 476.0 154.7 473.3 145.0 478.0 C135.3 482.7 139.0 481.5 130.0 484.0 C121.0 486.5 126.3 485.8 118.0 485.5 C109.7 485.2 113.3 485.5 105.0 483.0 C96.7 480.5 100.3 481.7 93.0 478.0 C85.7 474.3 88.3 476.3 83.0 472.0 C77.7 467.7 81.7 470.7 77.0 465.0 C72.3 459.3 74.0 461.0 69.0 455.0 C64.0 449.0 66.7 452.0 62.0 447.0 C57.3 442.0 59.0 445.7 55.0 440.0 C51.0 434.3 53.0 436.7 50.0 430.0 C47.0 423.3 48.5 426.7 46.0 420.0 C43.5 413.3 44.2 416.7 42.5 410.0 C40.8 403.3 41.8 406.7 41.0 400.0 C40.2 393.3 40.3 396.7 40.0 390.0 C39.7 383.3 39.2 386.7 40.0 380.0 C40.8 373.3 40.8 376.7 42.5 370.0 C44.2 363.3 43.5 366.7 45.0 360.0 C46.5 353.3 45.7 356.7 47.0 350.0 C48.3 343.3 47.0 346.7 49.0 340.0 C51.0 333.3 50.8 336.7 53.0 330.0 C55.2 323.3 54.2 326.7 55.5 320.0 C56.8 313.3 55.8 316.7 57.0 310.0 C58.2 303.3 57.0 306.7 59.0 300.0 C61.0 293.3 60.0 296.7 63.0 290.0 C66.0 283.3 64.7 286.7 68.0 280.0 C71.3 273.3 69.0 276.0 73.0 270.0 C77.0 264.0 73.0 266.7 80.0 262.0 C87.0 257.3 85.0 259.0 94.0 256.0 C103.0 253.0 97.0 254.8 107.0 253.0 C117.0 251.2 113.0 251.2 124.0 250.5Z"/></clipPath>
<clipPath id="bcb"><path d="M124.0 273.0 C133.8 273.1 129.7 272.3 136.0 274.0 C142.3 275.7 138.6 274.5 143.0 278.0 C147.4 281.5 145.3 280.2 149.3 284.4 C153.3 288.6 151.3 286.5 155.0 290.5 C158.7 294.5 156.0 291.6 160.3 296.5 C164.6 301.4 164.0 299.8 168.0 305.3 C172.0 310.8 171.3 307.5 172.4 313.0 C173.5 318.5 175.3 317.8 171.3 321.8 C167.3 325.8 166.9 323.6 160.3 325.1 C153.7 326.6 158.1 324.7 151.5 326.2 C144.9 327.7 147.0 327.6 140.5 329.5 C134.0 331.4 137.8 330.5 132.0 332.0 C126.2 333.5 129.7 334.2 123.0 334.0 C116.3 333.8 119.9 333.4 112.0 331.5 C104.1 329.6 108.1 330.1 99.4 328.4 C90.7 326.7 92.3 328.3 86.0 326.5 C79.7 324.7 82.7 326.5 80.5 323.0 C78.3 319.5 79.6 321.2 79.5 316.0 C79.4 310.8 79.1 313.2 80.3 307.5 C81.5 301.8 80.4 304.5 83.0 299.0 C85.6 293.5 83.4 296.2 88.0 291.0 C92.6 285.8 92.6 287.6 96.8 283.3 C101.0 279.0 97.2 281.2 100.5 278.0 C103.8 274.8 98.9 275.5 106.7 273.8 C114.5 272.1 114.2 272.9 124.0 273.0Z"/></clipPath>
</defs>
<path d="M124.0 250.5 C135.0 249.8 131.3 250.0 140.0 251.0 C148.7 252.0 143.3 250.8 150.0 253.5 C156.7 256.2 153.3 254.5 160.0 259.0 C166.7 263.5 163.3 260.7 170.0 267.0 C176.7 273.3 174.0 271.0 180.0 278.0 C186.0 285.0 183.7 280.7 188.0 288.0 C192.3 295.3 190.8 292.7 193.0 300.0 C195.2 307.3 193.7 303.3 194.5 310.0 C195.3 316.7 194.8 313.3 195.5 320.0 C196.2 326.7 195.7 323.3 196.5 330.0 C197.3 336.7 197.2 333.3 198.0 340.0 C198.8 346.7 198.2 343.3 199.0 350.0 C199.8 356.7 199.5 353.3 200.5 360.0 C201.5 366.7 200.8 363.3 202.0 370.0 C203.2 376.7 203.2 373.3 204.0 380.0 C204.8 386.7 204.3 383.3 204.5 390.0 C204.7 396.7 204.8 393.3 204.5 400.0 C204.2 406.7 205.0 403.3 203.5 410.0 C202.0 416.7 203.2 413.3 200.0 420.0 C196.8 426.7 198.0 423.3 194.0 430.0 C190.0 436.7 192.8 433.3 188.0 440.0 C183.2 446.7 185.3 443.3 179.5 450.0 C173.7 456.7 177.3 453.3 170.5 460.0 C163.7 466.7 167.5 464.0 159.0 470.0 C150.5 476.0 154.7 473.3 145.0 478.0 C135.3 482.7 139.0 481.5 130.0 484.0 C121.0 486.5 126.3 485.8 118.0 485.5 C109.7 485.2 113.3 485.5 105.0 483.0 C96.7 480.5 100.3 481.7 93.0 478.0 C85.7 474.3 88.3 476.3 83.0 472.0 C77.7 467.7 81.7 470.7 77.0 465.0 C72.3 459.3 74.0 461.0 69.0 455.0 C64.0 449.0 66.7 452.0 62.0 447.0 C57.3 442.0 59.0 445.7 55.0 440.0 C51.0 434.3 53.0 436.7 50.0 430.0 C47.0 423.3 48.5 426.7 46.0 420.0 C43.5 413.3 44.2 416.7 42.5 410.0 C40.8 403.3 41.8 406.7 41.0 400.0 C40.2 393.3 40.3 396.7 40.0 390.0 C39.7 383.3 39.2 386.7 40.0 380.0 C40.8 373.3 40.8 376.7 42.5 370.0 C44.2 363.3 43.5 366.7 45.0 360.0 C46.5 353.3 45.7 356.7 47.0 350.0 C48.3 343.3 47.0 346.7 49.0 340.0 C51.0 333.3 50.8 336.7 53.0 330.0 C55.2 323.3 54.2 326.7 55.5 320.0 C56.8 313.3 55.8 316.7 57.0 310.0 C58.2 303.3 57.0 306.7 59.0 300.0 C61.0 293.3 60.0 296.7 63.0 290.0 C66.0 283.3 64.7 286.7 68.0 280.0 C71.3 273.3 69.0 276.0 73.0 270.0 C77.0 264.0 73.0 266.7 80.0 262.0 C87.0 257.3 85.0 259.0 94.0 256.0 C103.0 253.0 97.0 254.8 107.0 253.0 C117.0 251.2 113.0 251.2 124.0 250.5Z" fill="url(#skinb)" filter="url(#b05b)"/>
<path d="M124.0 250.5 C135.0 249.8 131.3 250.0 140.0 251.0 C148.7 252.0 143.3 250.8 150.0 253.5 C156.7 256.2 153.3 254.5 160.0 259.0 C166.7 263.5 163.3 260.7 170.0 267.0 C176.7 273.3 174.0 271.0 180.0 278.0 C186.0 285.0 183.7 280.7 188.0 288.0 C192.3 295.3 190.8 292.7 193.0 300.0 C195.2 307.3 193.7 303.3 194.5 310.0 C195.3 316.7 194.8 313.3 195.5 320.0 C196.2 326.7 195.7 323.3 196.5 330.0 C197.3 336.7 197.2 333.3 198.0 340.0 C198.8 346.7 198.2 343.3 199.0 350.0 C199.8 356.7 199.5 353.3 200.5 360.0 C201.5 366.7 200.8 363.3 202.0 370.0 C203.2 376.7 203.2 373.3 204.0 380.0 C204.8 386.7 204.3 383.3 204.5 390.0 C204.7 396.7 204.8 393.3 204.5 400.0 C204.2 406.7 205.0 403.3 203.5 410.0 C202.0 416.7 203.2 413.3 200.0 420.0 C196.8 426.7 198.0 423.3 194.0 430.0 C190.0 436.7 192.8 433.3 188.0 440.0 C183.2 446.7 185.3 443.3 179.5 450.0 C173.7 456.7 177.3 453.3 170.5 460.0 C163.7 466.7 167.5 464.0 159.0 470.0 C150.5 476.0 154.7 473.3 145.0 478.0 C135.3 482.7 139.0 481.5 130.0 484.0 C121.0 486.5 126.3 485.8 118.0 485.5 C109.7 485.2 113.3 485.5 105.0 483.0 C96.7 480.5 100.3 481.7 93.0 478.0 C85.7 474.3 88.3 476.3 83.0 472.0 C77.7 467.7 81.7 470.7 77.0 465.0 C72.3 459.3 74.0 461.0 69.0 455.0 C64.0 449.0 66.7 452.0 62.0 447.0 C57.3 442.0 59.0 445.7 55.0 440.0 C51.0 434.3 53.0 436.7 50.0 430.0 C47.0 423.3 48.5 426.7 46.0 420.0 C43.5 413.3 44.2 416.7 42.5 410.0 C40.8 403.3 41.8 406.7 41.0 400.0 C40.2 393.3 40.3 396.7 40.0 390.0 C39.7 383.3 39.2 386.7 40.0 380.0 C40.8 373.3 40.8 376.7 42.5 370.0 C44.2 363.3 43.5 366.7 45.0 360.0 C46.5 353.3 45.7 356.7 47.0 350.0 C48.3 343.3 47.0 346.7 49.0 340.0 C51.0 333.3 50.8 336.7 53.0 330.0 C55.2 323.3 54.2 326.7 55.5 320.0 C56.8 313.3 55.8 316.7 57.0 310.0 C58.2 303.3 57.0 306.7 59.0 300.0 C61.0 293.3 60.0 296.7 63.0 290.0 C66.0 283.3 64.7 286.7 68.0 280.0 C71.3 273.3 69.0 276.0 73.0 270.0 C77.0 264.0 73.0 266.7 80.0 262.0 C87.0 257.3 85.0 259.0 94.0 256.0 C103.0 253.0 97.0 254.8 107.0 253.0 C117.0 251.2 113.0 251.2 124.0 250.5Z" fill="none" stroke="#f4d6c4" stroke-width="1.8" filter="url(#b1b)" opacity=".7"/>
<g clip-path="url(#hcb)">
 <!-- inner pale (skull + soft tissue) -->
 <path d="M123.8 262.0 C133.7 261.3 130.4 261.5 138.2 262.4 C145.9 263.2 141.2 262.2 147.1 264.6 C153.1 267.1 150.1 265.6 156.0 269.8 C161.9 274.0 158.9 271.5 164.8 277.2 C170.7 283.0 168.0 281.1 173.7 287.0 C179.4 292.8 177.2 288.9 181.8 294.8 C186.5 300.6 185.4 298.1 187.7 304.5 C190.0 310.9 188.2 307.7 188.8 314.0 C189.3 320.3 188.9 317.2 189.4 323.4 C189.8 329.6 189.4 326.5 190.0 332.6 C190.6 338.8 190.6 335.7 191.2 341.8 C191.9 347.9 191.3 344.8 192.1 350.9 C192.8 357.0 192.5 353.9 193.5 360.0 C194.5 366.1 193.8 363.0 195.1 369.1 C196.3 375.2 196.2 372.2 197.2 378.3 C198.2 384.5 197.6 381.4 197.9 387.6 C198.3 393.8 198.3 390.7 198.2 396.9 C198.1 403.2 198.8 400.1 197.5 406.3 C196.3 412.6 197.1 409.3 194.5 415.7 C191.8 422.1 192.8 418.9 189.5 425.6 C186.2 432.2 188.7 428.9 184.5 435.7 C180.2 442.4 182.1 439.0 176.9 445.9 C171.6 452.7 175.0 449.3 168.7 456.2 C162.4 463.2 166.0 460.6 157.9 466.7 C149.8 472.8 153.7 470.0 144.3 474.6 C135.0 479.2 138.5 478.0 129.8 480.5 C121.0 483.0 126.2 482.3 118.1 482.0 C110.0 481.7 113.6 482.0 105.5 479.5 C97.4 477.1 101.0 478.2 93.8 474.6 C86.7 471.0 89.3 473.1 84.2 468.7 C79.1 464.3 82.8 467.4 78.5 461.5 C74.2 455.6 75.8 457.3 71.2 451.0 C66.7 444.8 69.1 447.9 64.9 442.8 C60.7 437.7 62.1 441.4 58.6 435.7 C55.1 430.0 56.9 432.3 54.5 425.6 C52.2 418.9 53.5 422.1 51.5 415.7 C49.5 409.2 49.8 412.5 48.4 406.3 C47.0 400.0 47.9 403.1 47.3 396.9 C46.7 390.7 46.7 393.8 46.6 387.6 C46.4 381.4 45.8 384.5 46.8 378.4 C47.8 372.2 47.7 375.2 49.4 369.1 C51.2 363.0 50.5 366.1 52.0 360.0 C53.5 353.9 52.7 357.0 53.9 350.9 C55.2 344.9 53.9 347.9 55.8 341.8 C57.6 335.8 57.5 338.9 59.4 332.8 C61.3 326.7 60.5 329.8 61.5 323.6 C62.6 317.4 61.7 320.5 62.6 314.2 C63.4 308.0 62.0 310.7 64.1 304.8 C66.1 299.0 65.4 302.1 68.7 296.7 C72.0 291.4 70.7 294.3 74.0 288.8 C77.2 283.2 75.0 285.5 78.5 280.1 C82.1 274.7 78.4 276.9 84.6 272.6 C90.7 268.2 89.0 269.8 97.0 267.1 C105.1 264.4 99.7 266.1 108.6 264.4 C117.6 262.7 114.0 262.7 123.8 262.0Z" fill="#e4ccc4" filter="url(#b1b)"/>
 <!-- mauve shadow around brain -->
 <path d="M124.0 269.5 C133.8 269.3 129.5 269.4 136.0 269.8 C142.5 270.2 138.7 269.1 143.4 270.8 C148.1 272.5 145.5 271.1 150.0 275.0 C154.5 278.9 151.0 276.8 157.0 282.5 C163.0 288.2 161.8 284.9 168.0 292.1 C174.2 299.3 172.4 297.2 175.7 304.2 C179.0 311.2 177.5 306.7 177.9 313.0 C178.3 319.3 180.1 317.5 176.8 323.0 C173.5 328.5 176.4 326.5 168.0 329.5 C159.6 332.5 160.7 330.4 151.5 332.0 C142.3 333.6 147.0 332.6 140.5 334.2 C134.0 335.8 137.8 335.4 132.0 336.8 C126.2 338.2 129.7 338.6 123.0 338.5 C116.3 338.4 120.0 338.5 112.0 336.5 C104.0 334.5 107.0 334.3 99.0 332.5 C91.0 330.7 94.7 332.0 88.0 331.0 C81.3 330.0 84.2 331.2 79.0 329.5 C73.8 327.8 75.3 329.8 72.5 326.0 C69.7 322.2 70.8 324.2 70.5 318.0 C70.2 311.8 70.5 313.8 71.5 307.5 C72.5 301.2 71.7 304.5 73.5 299.0 C75.3 293.5 74.2 295.2 77.0 291.0 C79.8 286.8 78.3 289.3 82.0 286.5 C85.7 283.7 83.0 286.2 88.0 282.5 C93.0 278.8 90.8 279.5 97.0 275.5 C103.2 271.5 97.7 272.4 106.7 270.4 C115.7 268.4 114.2 269.7 124.0 269.5Z" fill="none" stroke="#b08a86" stroke-width="5" filter="url(#b2b)" opacity=".8"/>
 <!-- white highlights on skull -->
 <path d="M84 276 C96 266 110 263.5 124 263.5 C138 263.5 152 266 164 276" fill="none" stroke="#f6ecea" stroke-width="2.5" filter="url(#b1b)"/>
 <path d="M68 300 C66 310 64 322 64 334" fill="none" stroke="#f3e6e2" stroke-width="3" filter="url(#b1b)"/>
 <path d="M181 296 C183 306 184 318 184 330" fill="none" stroke="#f3e6e2" stroke-width="3" filter="url(#b1b)"/>
 <!-- lower orange fat -->
 <path d="M38 398 C44 445 80 488 122 488 C165 488 202 445 207 398 C200 420 184 440 162 452 C152 444 150 425 150 415 L96 415 C96 425 94 444 84 452 C62 440 46 420 38 398Z" fill="#eda052" filter="url(#b2b)"/>
 <path d="M50 404 C56 430 74 452 94 466 L99 456 C84 444 70 428 64 404Z" fill="#f2ab60" filter="url(#b1b)"/>
 <path d="M197 400 C190 430 172 452 150 466 L146 456 C164 442 178 424 184 400Z" fill="#f2a654" filter="url(#b1b)"/>
 <!-- cheeks pale gray-pink -->
 <path d="M52 345 C58 338 70 342 74 350 C78 370 76 395 82 410 C70 410 54 400 49 385 C47 370 49 355 52 345Z" fill="#cda59e" filter="url(#b2b)"/>
 <path d="M58 372 C62 368 70 370 72 378 C73 388 72 394 68 398 C60 394 56 384 58 372Z" fill="#b48a88" filter="url(#b2b)"/>
 <path d="M195 345 C189 338 176 342 172 350 C168 370 170 395 164 410 C176 410 192 400 197 385 C199 370 197 355 195 345Z" fill="#d9bcba" filter="url(#b2b)"/>
 <path d="M186 376 C182 372 174 374 172 382 C171 392 173 398 178 402 C184 398 188 388 186 376Z" fill="#a88486" filter="url(#b2b)"/>
 <!-- temporal muscle crescents -->
 <path d="M58.5 328 C57 334 57 338 59 341 C62 338 63 333 62.5 328Z" fill="#c4523f" filter="url(#b05b)"/>
 <path d="M70 334 C67 340 67 346 70 350 C74 346 75 340 74 334Z" fill="#c8503e" filter="url(#b05b)"/>
 <path d="M183 316 C189 326 191 338 187 347 C182 346 180 340 180 330Z" fill="#cc5a46" filter="url(#b05b)"/>
 <!-- mid face base pale -->
 <path d="M74 340 C96 336 150 336 174 340 C180 356 180 392 168 408 C150 414 96 414 78 408 C66 392 68 356 74 340Z" fill="#e6cabf" filter="url(#b2b)"/>
 <!-- pale bone between orbits / under brain -->
 <path d="M70 333 C90 337 110 339 124 343 C138 339 158 337 178 332 L176 340 C160 344 140 344 124 348 C108 344 88 344 72 341Z" fill="#ecdcd6" filter="url(#b1b)"/>
 <!-- shadow under brain -->
 <path d="M72 331 C84 334 100 335 110 337 L108 341 C98 339 84 338 74 336Z" fill="#9a6e68" filter="url(#b1b)" opacity=".8"/>
 <path d="M176 328 C164 332 148 334 138 337 L140 341 C150 338 164 336 175 333Z" fill="#9a6e68" filter="url(#b1b)" opacity=".8"/>
 <!-- orbits -->
 <ellipse cx="84" cy="355" rx="11.2" ry="12.5" fill="#96342a" filter="url(#b05b)"/>
 <path d="M80 343.2 C90 341.5 96.5 348 95.5 358 C93 351 88 347 80 346.5Z" fill="#160a0a" filter="url(#b05b)"/>
 <ellipse cx="82" cy="357.5" rx="7.8" ry="8.3" fill="#de5028" filter="url(#b05b)"/>
 <ellipse cx="158.5" cy="353.5" rx="11.5" ry="12" fill="#86302a" filter="url(#b05b)"/>
 <path d="M152 342.5 C163 340 170.5 347 169.5 358 C166 351 161 346 152 345.5Z" fill="#341412" filter="url(#b05b)"/>
 <ellipse cx="155" cy="356.5" rx="6.5" ry="6.5" fill="#c4482e" filter="url(#b05b)"/>
 <!-- nasal cavity -->
 <path d="M100 350 C108 342 138 342 146 350 C150 365 148 392 142 407 L106 407 C99 392 96 365 100 350Z" fill="#b85048" filter="url(#b1b)"/>
 <path d="M110 352 C106 366 108 384 112 398 C114 384 114 366 113 352Z" fill="#8a2e2c" filter="url(#b05b)"/>
 <path d="M136 352 C140 366 138 384 134 398 C132 384 132 366 133 352Z" fill="#8a2e2c" filter="url(#b05b)"/>
 <path d="M118 356 C116 370 117 388 120 400 C122 388 122 370 121 356Z" fill="#9a3836" filter="url(#b05b)"/>
 <path d="M128 356 C130 370 129 388 126 400 C124 388 124 370 125 356Z" fill="#9a3836" filter="url(#b05b)"/>
 <path d="M123.5 346 L123.5 404" stroke="#eed2ca" stroke-width="1.8" fill="none" filter="url(#b05b)"/>
 <path d="M115.5 350 C114 364 115 384 117 400 M131 350 C132.5 364 131.5 384 130 400" stroke="#e6beb4" stroke-width="1.400" fill="none" filter="url(#b05b)"/>
 <!-- maxillary sinuses -->
 <ellipse cx="90" cy="387" rx="13.8" ry="18.3" fill="#f0ded8" filter="url(#b05b)"/>
 <ellipse cx="90" cy="387" rx="12.6" ry="17.2" fill="#7e2826" filter="url(#b05b)"/>
 <ellipse cx="90.5" cy="386" rx="10.8" ry="15" fill="#d8523e" filter="url(#b1b)"/>
 <path d="M80 396 C84 404 96 405 101 396 C96 400 86 401 80 396Z" fill="#5e1c1c" filter="url(#b05b)"/>
 <ellipse cx="152.5" cy="388" rx="13.5" ry="17.5" fill="#f0ded8" filter="url(#b05b)"/>
 <ellipse cx="152.5" cy="388" rx="12.3" ry="16.3" fill="#7e2826" filter="url(#b05b)"/>
 <ellipse cx="152" cy="387" rx="10.5" ry="14.3" fill="#d25240" filter="url(#b1b)"/>
 <path d="M143 397 C148 405 159 405 163 395 C158 400 149 401 143 397Z" fill="#5e1c1c" filter="url(#b05b)"/>
 <!-- palate pale band -->
 <path d="M82 404 C100 410 146 410 166 404 L164 414 C146 419 100 419 84 414Z" fill="#e6c8be" filter="url(#b1b)"/>
 <!-- masseter / pterygoid muscles -->
 <path d="M66 402 C72 398 82 402 84 412 C86 428 86 444 91 459 C78 452 67 434 66 402Z" fill="#b03e34" filter="url(#b1b)"/><path d="M74 410 C76 426 78 440 84 452" stroke="#e6b8a8" stroke-width="1.2" fill="none" filter="url(#b05b)" opacity=".7"/>
 <path d="M182 400 C174 396 164 402 162 412 C160 424 158 436 154 448 C166 444 180 430 182 400Z" fill="#ecc0a4" filter="url(#b1b)"/><path d="M189 398 C186 420 172 444 151 461" stroke="#b94a38" stroke-width="2.6" fill="none" filter="url(#b05b)"/><path d="M163 414 C158 424 166 430 162 438 C160 444 158 448 156 452" stroke="#b03a34" stroke-width="3.2" fill="none" filter="url(#b05b)"/>
 
 <path d="M53 390 C57 388 61 392 62 398 C60 404 56 400 53 390Z" fill="#b84038" filter="url(#b05b)"/>
 <path d="M184 396 C188 392 192 394 190 402 C188 410 183 408 184 396Z" fill="#c0443c" filter="url(#b05b)"/>
 <!-- mouth floor pinkish -->
 <path d="M94 414 L152 414 L150 440 L140 470 L98 470 L92 440Z" fill="#e2b4a8" filter="url(#b1b)"/>
 <!-- mandible white U -->
 <path d="M85 428 L96 428 L101 460 C106 466 114 468.5 122 468.5 C130 468.5 134 466 136.5 460 L139.5 427 L149 427 L148 464 C143 472 134 475.5 120 475.5 C104 475.5 94 472 88 464Z" fill="#f4efee" filter="url(#b05b)"/>
 <path d="M88 436 L95.5 436 L99.5 461 L91.5 462Z" fill="#8c6a6e" filter="url(#b1b)" opacity=".9"/>
 <path d="M147 448 L140.5 448 L139 463 L146 463Z" fill="#9a7876" filter="url(#b1b)" opacity=".85"/>
 <!-- oral cavity dark arc -->
 <path d="M97 421 C99 407 140 407 142 421 C138 412.5 101 412.5 97 421Z" fill="#742622" filter="url(#b05b)"/>
 <!-- genioglossus (lower tongue) -->
 <path d="M104 436 L134 436 C134 450 131 462 128 467 L125 461 L121 470 L117 461 L112 467 C108 462 104 450 104 436Z" fill="#ad3e3a" filter="url(#b05b)"/>
 <path d="M118 446 L121 466 M124 446 L123 462" stroke="#e8c8c0" stroke-width="0.9" fill="none" opacity=".7"/>
 <!-- tongue -->
 <path d="M97.5 427 C97 415.5 109 411 118.5 415.5 C128 411 140.5 415.5 140 427 C139.5 436 134 441 128 443 L110 443 C103 441 98 436 97.5 427Z" fill="#b94c4e" stroke="#8e3434" stroke-width="0.6" filter="url(#b05b)"/>
 <path d="M103 427 C103 420 111 417 118.5 421 C126 417 135 420 135 427 C134 434 128 438 119 438 C110 438 104 434 103 427Z" fill="#c96a6a" filter="url(#b1b)" opacity=".75"/>
 <path d="M118.5 416 L119 442" stroke="#8e3438" stroke-width="0.9" opacity=".7"/>
 <!-- brain -->
 <path d="M124.0 269.5 C133.8 269.3 129.5 269.4 136.0 269.8 C142.5 270.2 138.7 269.1 143.4 270.8 C148.1 272.5 145.5 271.1 150.0 275.0 C154.5 278.9 151.0 276.8 157.0 282.5 C163.0 288.2 161.8 284.9 168.0 292.1 C174.2 299.3 172.4 297.2 175.7 304.2 C179.0 311.2 177.5 306.7 177.9 313.0 C178.3 319.3 180.1 317.5 176.8 323.0 C173.5 328.5 176.4 326.5 168.0 329.5 C159.6 332.5 160.7 330.4 151.5 332.0 C142.3 333.6 147.0 332.6 140.5 334.2 C134.0 335.8 137.8 335.4 132.0 336.8 C126.2 338.2 129.7 338.6 123.0 338.5 C116.3 338.4 120.0 338.5 112.0 336.5 C104.0 334.5 107.0 334.3 99.0 332.5 C91.0 330.7 94.7 332.0 88.0 331.0 C81.3 330.0 84.2 331.2 79.0 329.5 C73.8 327.8 75.3 329.8 72.5 326.0 C69.7 322.2 70.8 324.2 70.5 318.0 C70.2 311.8 70.5 313.8 71.5 307.5 C72.5 301.2 71.7 304.5 73.5 299.0 C75.3 293.5 74.2 295.2 77.0 291.0 C79.8 286.8 78.3 289.3 82.0 286.5 C85.7 283.7 83.0 286.2 88.0 282.5 C93.0 278.8 90.8 279.5 97.0 275.5 C103.2 271.5 97.7 272.4 106.7 270.4 C115.7 268.4 114.2 269.7 124.0 269.5Z" fill="#5e3634" filter="url(#b05b)"/>
 <path d="M124.0 273.0 C133.8 273.1 129.7 272.3 136.0 274.0 C142.3 275.7 138.6 274.5 143.0 278.0 C147.4 281.5 145.3 280.2 149.3 284.4 C153.3 288.6 151.3 286.5 155.0 290.5 C158.7 294.5 156.0 291.6 160.3 296.5 C164.6 301.4 164.0 299.8 168.0 305.3 C172.0 310.8 171.3 307.5 172.4 313.0 C173.5 318.5 175.3 317.8 171.3 321.8 C167.3 325.8 166.9 323.6 160.3 325.1 C153.7 326.6 158.1 324.7 151.5 326.2 C144.9 327.7 147.0 327.6 140.5 329.5 C134.0 331.4 137.8 330.5 132.0 332.0 C126.2 333.5 129.7 334.2 123.0 334.0 C116.3 333.8 119.9 333.4 112.0 331.5 C104.1 329.6 108.1 330.1 99.4 328.4 C90.7 326.7 92.3 328.3 86.0 326.5 C79.7 324.7 82.7 326.5 80.5 323.0 C78.3 319.5 79.6 321.2 79.5 316.0 C79.4 310.8 79.1 313.2 80.3 307.5 C81.5 301.8 80.4 304.5 83.0 299.0 C85.6 293.5 83.4 296.2 88.0 291.0 C92.6 285.8 92.6 287.6 96.8 283.3 C101.0 279.0 97.2 281.2 100.5 278.0 C103.8 274.8 98.9 275.5 106.7 273.8 C114.5 272.1 114.2 272.9 124.0 273.0Z" fill="#f0e8dc" filter="url(#b05b)"/>
 <g clip-path="url(#bcb)"><rect x="70" y="268" width="112" height="72" fill="#b89080" filter="url(#nzb)" opacity=".32"/></g>
 <path d="M124 270 C123 290 125 310 123.5 337" stroke="#6e4a44" stroke-width="1.5" fill="none" filter="url(#b05b)"/>
 <!-- overall texture -->
 <rect x="36" y="248" width="172" height="240" fill="#000" filter="url(#nzb)" opacity=".28"/>
</g>
<polygon points="145.8,307.4 143.0,312.3 137.4,312.3 134.6,307.4 137.4,302.5 143.0,302.5" fill="#fff200" stroke="#6e5e14" stroke-width="1.1"/><polygon points="172.5,314.0 169.7,318.9 164.1,318.9 161.3,314.0 164.1,309.1 169.7,309.1" fill="#fff200" stroke="#6e5e14" stroke-width="1.1"/><polygon points="111.9,319.2 109.1,324.1 103.5,324.1 100.7,319.2 103.5,314.3 109.1,314.3" fill="#fff200" stroke="#6e5e14" stroke-width="1.1"/><polygon points="148.7,320.4 145.9,325.3 140.3,325.3 137.5,320.4 140.3,315.5 145.9,315.5" fill="#fff200" stroke="#6e5e14" stroke-width="1.1"/><polygon points="128.8,324.6 126.0,329.5 120.4,329.5 117.6,324.6 120.4,319.7 126.0,319.7" fill="#fff200" stroke="#6e5e14" stroke-width="1.1"/><polygon points="114.0,274.6 118.8,283.1 109.2,283.1" fill="#f5601a" stroke="#5a1a8c" stroke-width="1.15" stroke-linejoin="round"/><polygon points="135.3,275.2 140.1,283.8 130.6,283.8" fill="#f5601a" stroke="#5a1a8c" stroke-width="1.15" stroke-linejoin="round"/><polygon points="90.6,287.8 95.3,296.2 85.8,296.2" fill="#f5601a" stroke="#5a1a8c" stroke-width="1.15" stroke-linejoin="round"/><polygon points="157.4,289.6 162.2,298.1 152.7,298.1" fill="#f5601a" stroke="#5a1a8c" stroke-width="1.15" stroke-linejoin="round"/><polygon points="107.0,293.6 111.8,302.1 102.2,302.1" fill="#f5601a" stroke="#5a1a8c" stroke-width="1.15" stroke-linejoin="round"/><polygon points="82.8,306.9 87.5,315.4 78.0,315.4" fill="#f5601a" stroke="#5a1a8c" stroke-width="1.15" stroke-linejoin="round"/><polygon points="94.3,333.9 99.0,342.4 89.5,342.4" fill="#f5601a" stroke="#5a1a8c" stroke-width="1.15" stroke-linejoin="round"/><polygon points="140.2,333.6 144.9,342.1 135.4,342.1" fill="#f5601a" stroke="#5a1a8c" stroke-width="1.15" stroke-linejoin="round"/><polygon points="147.5,334.2 152.2,342.8 142.8,342.8" fill="#f5601a" stroke="#5a1a8c" stroke-width="1.15" stroke-linejoin="round"/><polygon points="136.9,339.9 141.7,348.4 132.2,348.4" fill="#f5601a" stroke="#5a1a8c" stroke-width="1.15" stroke-linejoin="round"/><polygon points="82.6,342.1 87.3,350.6 77.8,350.6" fill="#f5601a" stroke="#5a1a8c" stroke-width="1.15" stroke-linejoin="round"/><polygon points="125.9,344.9 130.7,353.4 121.2,353.4" fill="#f5601a" stroke="#5a1a8c" stroke-width="1.15" stroke-linejoin="round"/><polygon points="101.4,347.9 106.2,356.4 96.7,356.4" fill="#f5601a" stroke="#5a1a8c" stroke-width="1.15" stroke-linejoin="round"/><polygon points="106.8,351.6 111.5,360.1 102.0,360.1" fill="#f5601a" stroke="#5a1a8c" stroke-width="1.15" stroke-linejoin="round"/><polygon points="112.7,350.9 117.5,359.4 108.0,359.4" fill="#f5601a" stroke="#5a1a8c" stroke-width="1.15" stroke-linejoin="round"/><polygon points="136.2,352.4 140.9,360.9 131.4,360.9" fill="#f5601a" stroke="#5a1a8c" stroke-width="1.15" stroke-linejoin="round"/><polygon points="155.1,342.8 159.8,351.2 150.3,351.2" fill="#f5601a" stroke="#5a1a8c" stroke-width="1.15" stroke-linejoin="round"/><polygon points="155.8,348.6 160.6,357.1 151.1,357.1" fill="#f5601a" stroke="#5a1a8c" stroke-width="1.15" stroke-linejoin="round"/><polygon points="161.0,355.2 165.8,363.8 156.2,363.8" fill="#f5601a" stroke="#5a1a8c" stroke-width="1.15" stroke-linejoin="round"/><polygon points="173.0,350.1 177.8,358.6 168.2,358.6" fill="#f5601a" stroke="#5a1a8c" stroke-width="1.15" stroke-linejoin="round"/><polygon points="88.5,355.9 93.2,364.4 83.8,364.4" fill="#f5601a" stroke="#5a1a8c" stroke-width="1.15" stroke-linejoin="round"/><polygon points="119.3,357.4 124.0,365.9 114.5,365.9" fill="#f5601a" stroke="#5a1a8c" stroke-width="1.15" stroke-linejoin="round"/><polygon points="125.2,357.1 129.9,365.6 120.5,365.6" fill="#f5601a" stroke="#5a1a8c" stroke-width="1.15" stroke-linejoin="round"/><polygon points="131.3,357.4 136.1,365.9 126.6,365.9" fill="#f5601a" stroke="#5a1a8c" stroke-width="1.15" stroke-linejoin="round"/><polygon points="90.2,362.1 95.0,370.6 85.5,370.6" fill="#f5601a" stroke="#5a1a8c" stroke-width="1.15" stroke-linejoin="round"/><polygon points="108.7,366.6 113.5,375.1 104.0,375.1" fill="#f5601a" stroke="#5a1a8c" stroke-width="1.15" stroke-linejoin="round"/><polygon points="117.5,368.1 122.2,376.6 112.8,376.6" fill="#f5601a" stroke="#5a1a8c" stroke-width="1.15" stroke-linejoin="round"/><polygon points="98.0,372.1 102.8,380.6 93.2,380.6" fill="#f5601a" stroke="#5a1a8c" stroke-width="1.15" stroke-linejoin="round"/><polygon points="125.9,372.1 130.7,380.6 121.2,380.6" fill="#f5601a" stroke="#5a1a8c" stroke-width="1.15" stroke-linejoin="round"/><polygon points="83.3,373.6 88.0,382.1 78.5,382.1" fill="#f5601a" stroke="#5a1a8c" stroke-width="1.15" stroke-linejoin="round"/><polygon points="116.7,381.2 121.5,389.8 112.0,389.8" fill="#f5601a" stroke="#5a1a8c" stroke-width="1.15" stroke-linejoin="round"/><polygon points="125.9,381.8 130.7,390.2 121.2,390.2" fill="#f5601a" stroke="#5a1a8c" stroke-width="1.15" stroke-linejoin="round"/><polygon points="158.3,378.8 163.1,387.2 153.6,387.2" fill="#f5601a" stroke="#5a1a8c" stroke-width="1.15" stroke-linejoin="round"/><polygon points="81.4,382.8 86.2,391.2 76.7,391.2" fill="#f5601a" stroke="#5a1a8c" stroke-width="1.15" stroke-linejoin="round"/><polygon points="145.0,384.1 149.8,392.6 140.2,392.6" fill="#f5601a" stroke="#5a1a8c" stroke-width="1.15" stroke-linejoin="round"/><polygon points="98.4,388.1 103.2,396.6 93.7,396.6" fill="#f5601a" stroke="#5a1a8c" stroke-width="1.15" stroke-linejoin="round"/><polygon points="108.7,389.8 113.5,398.2 104.0,398.2" fill="#f5601a" stroke="#5a1a8c" stroke-width="1.15" stroke-linejoin="round"/><polygon points="133.7,388.2 138.4,396.8 128.9,396.8" fill="#f5601a" stroke="#5a1a8c" stroke-width="1.15" stroke-linejoin="round"/><polygon points="147.9,394.1 152.7,402.6 143.2,402.6" fill="#f5601a" stroke="#5a1a8c" stroke-width="1.15" stroke-linejoin="round"/><polygon points="89.6,395.6 94.3,404.1 84.8,404.1" fill="#f5601a" stroke="#5a1a8c" stroke-width="1.15" stroke-linejoin="round"/><polygon points="115.6,397.8 120.3,406.2 110.8,406.2" fill="#f5601a" stroke="#5a1a8c" stroke-width="1.15" stroke-linejoin="round"/><polygon points="128.1,397.8 132.8,406.2 123.3,406.2" fill="#f5601a" stroke="#5a1a8c" stroke-width="1.15" stroke-linejoin="round"/><polygon points="86.2,418.9 91.0,427.4 81.5,427.4" fill="#f5601a" stroke="#5a1a8c" stroke-width="1.15" stroke-linejoin="round"/><polygon points="145.3,417.6 150.1,426.1 140.6,426.1" fill="#f5601a" stroke="#5a1a8c" stroke-width="1.15" stroke-linejoin="round"/><polygon points="90.8,433.6 95.5,442.1 86.0,442.1" fill="#f5601a" stroke="#5a1a8c" stroke-width="1.15" stroke-linejoin="round"/><polygon points="143.2,438.8 147.9,447.2 138.4,447.2" fill="#f5601a" stroke="#5a1a8c" stroke-width="1.15" stroke-linejoin="round"/><polygon points="97.8,457.9 102.5,466.4 93.0,466.4" fill="#f5601a" stroke="#5a1a8c" stroke-width="1.15" stroke-linejoin="round"/><polygon points="138.4,457.9 143.2,466.4 133.7,466.4" fill="#f5601a" stroke="#5a1a8c" stroke-width="1.15" stroke-linejoin="round"/><polygon points="109.1,337.1 106.3,342.0 100.7,342.0 97.9,337.1 100.7,332.2 106.3,332.2" fill="#fff200" stroke="#6e5e14" stroke-width="1.1"/><polygon points="115.0,341.5 112.2,346.4 106.6,346.4 103.8,341.5 106.6,336.6 112.2,336.6" fill="#fff200" stroke="#6e5e14" stroke-width="1.1"/><polygon points="156.7,378.6 153.9,383.5 148.3,383.5 145.5,378.6 148.3,373.7 153.9,373.7" fill="#fff200" stroke="#6e5e14" stroke-width="1.1"/><polygon points="82.6,348.8 91,348.8 86.8,357" fill="#e8104e" stroke="#3a12b0" stroke-width="1.1"/>
</svg></div>
<div class="num" style="left:231.2px;top:248px;font-weight:bold;font-family:'DejaVu Sans',sans-serif;font-size:14px">1</div>
<div class="num" style="left:481.4px;top:248.5px">2</div>
<span class="meta" id="mm" style="left:260.5px;top:250px;transform:scaleX(1.0289)">(META-therapy)</span>
<span class="date" id="dd1" style="left:5.5px;top:476px;transform:scaleX(1.0148)">2014/1/13</span>
<span class="date" id="dd2" style="left:255px;top:476px;transform:scaleX(1.0148)">2014/1/13</span>
<svg class="chart" style="position:absolute;left:0;top:0" width="800" height="545" viewBox="0 0 800 545">
<defs><filter id="cb" x="-5%" y="-20%" width="110%" height="140%"><feGaussianBlur stdDeviation="0.5"/></filter>
<clipPath id="cc"><rect x="506.3" y="246" width="213.7" height="213.600000000002"/></clipPath></defs>
<rect x="506.3" y="246" width="213.7" height="213.600000000002" fill="#020203"/>
<g filter="url(#cb)"><line x1="533" y1="246" x2="533" y2="459.6" stroke="#1f6629" stroke-width="1.05"/><line x1="559.8" y1="246" x2="559.8" y2="459.6" stroke="#1f6629" stroke-width="1.05"/><line x1="586.6" y1="246" x2="586.6" y2="459.6" stroke="#1f6629" stroke-width="1.05"/><line x1="612.6" y1="246" x2="612.6" y2="459.6" stroke="#2a8434" stroke-width="1.6"/><line x1="639.3" y1="246" x2="639.3" y2="459.6" stroke="#1f6629" stroke-width="1.05"/><line x1="666.5" y1="246" x2="666.5" y2="459.6" stroke="#1f6629" stroke-width="1.05"/><line x1="693.6" y1="246" x2="693.6" y2="459.6" stroke="#1f6629" stroke-width="1.05"/><line x1="506.3" y1="262.3" x2="720" y2="262.3" stroke="#1f6629" stroke-width="1.05"/><line x1="506.3" y1="295" x2="720" y2="295" stroke="#1f6629" stroke-width="1.05"/><line x1="506.3" y1="328.5" x2="720" y2="328.5" stroke="#1f6629" stroke-width="1.05"/><line x1="506.3" y1="361.6" x2="720" y2="361.6" stroke="#1f6629" stroke-width="1.05"/><line x1="506.3" y1="394.2" x2="720" y2="394.2" stroke="#1f6629" stroke-width="1.05"/><line x1="506.3" y1="427.4" x2="720" y2="427.4" stroke="#1f6629" stroke-width="1.05"/></g>
<rect x="506.90000000000003" y="246.6" width="212.5" height="212.40000000000003" fill="none" stroke="#0a0a72" stroke-width="1.4"/>
<g clip-path="url(#cc)" filter="url(#cb)">
<polyline points="506.3,373.4 518.4,361.8 528.7,355.2 533.5,354.7 541.8,356.3 551.4,359 561,360.4 572,359.4 587.2,358 602.3,357 611.9,355.9 624.4,348.1 638.7,338.7 653.1,335.4 666.1,333.7 679,335 694.1,338 707.7,345.3 720,351.7" fill="none" stroke="#8228ff" stroke-width="3.2" stroke-linejoin="round"/>
<polyline points="506.3,374.2 518.4,362.5 528.7,355.9 533.5,355.3 541.8,356.8 551.4,359.6 561,362.3 572,365 581.7,366.4 591.3,366 602.3,362.9 611.9,359.4 624.4,349.3 638.7,340 653.1,336.6 666.1,335 679,336.3 694.1,339.2 707.7,346.4 720,352.8" fill="none" stroke="#ff7a3c" stroke-width="2.1" stroke-linejoin="round" opacity=".92"/>
</g>
</svg>
<div class="ico"><svg width="19" height="19.5" viewBox="0 0 19 19.5"><circle cx="9.3" cy="9.7" r="8.4" fill="#1a1ee0" stroke="#e6ecfa" stroke-width="1.1"/><circle cx="9.3" cy="5.1" r="1.25" fill="#fff"/><rect x="8.2" y="7.3" width="2.2" height="7.4" rx="0.6" fill="#fff"/></svg></div>
<span class="info" id="i0" style="top:465px;transform:scaleX(0.9664)">Wide lines represent the top organ's</span>
<span class="info" id="i1" style="top:476px;transform:scaleX(0.9147)">graphs</span>
<div class="status"></div>
<span class="stext" id="s0" style="transform:scaleX(0.9840)">2014/1/13 CT-FRONTAL CROSS-SECTION OF HEAD</span>
</body></html>
